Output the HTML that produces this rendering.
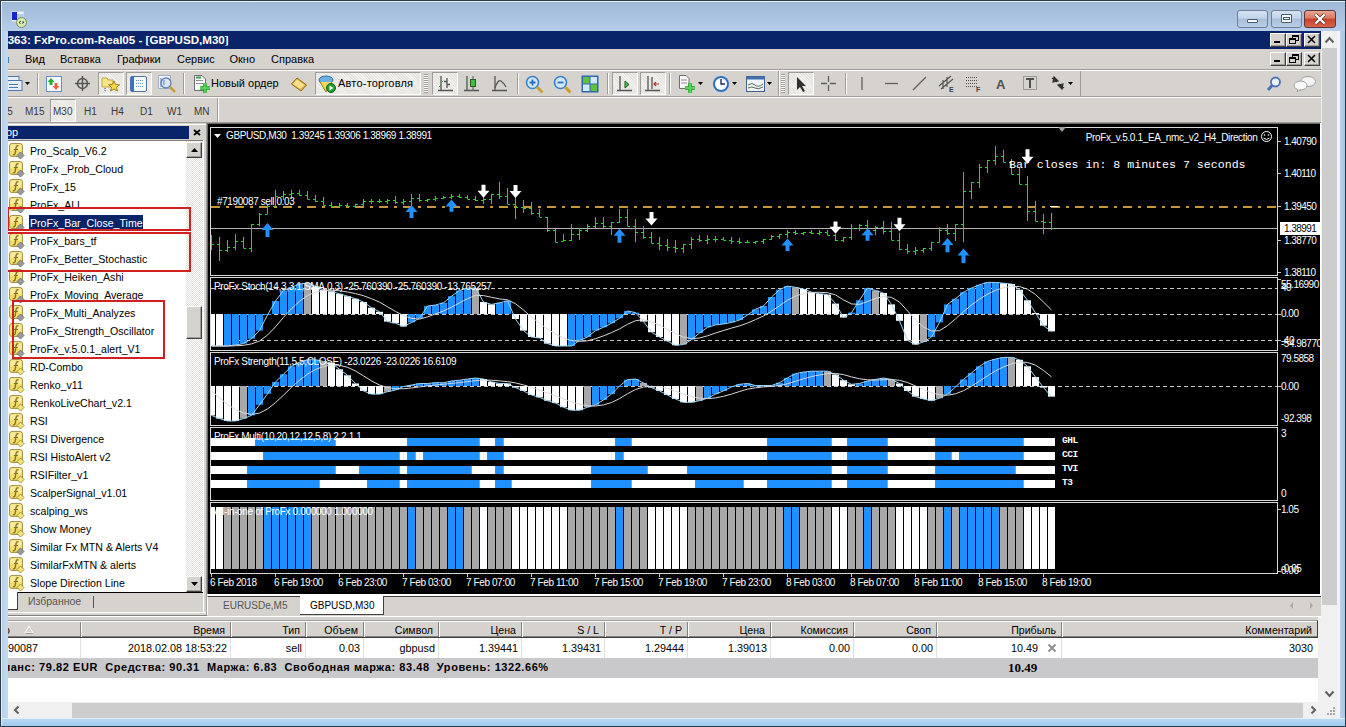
<!DOCTYPE html><html><head><meta charset="utf-8"><style>
*{margin:0;padding:0;box-sizing:border-box}
html,body{width:1346px;height:727px;overflow:hidden;background:#b9d1ea;font-family:"Liberation Sans",sans-serif;font-size:11px;color:#000}
.a{position:absolute}
.t{position:absolute;white-space:nowrap;line-height:1}
.gray{background:#d6d3ce}
.btnp{position:absolute;border:1px solid;border-color:#a09d98 #fff #fff #a09d98;background:repeating-linear-gradient(45deg,#e6e4e0 0 1px,#f2f1ee 1px 2px)}
.sep{position:absolute;width:2px;border-left:1px solid #a09d98;border-right:1px solid #fff}
</style></head><body>
<div class="a" style="left:0;top:0;width:1346px;height:727px;background:linear-gradient(#9db7d7 0,#a6c0dd 13px,#b5cde9 30px,#b9d1ea 60px)"></div>
<div class="a" style="left:0;top:0;width:1346px;height:1px;background:#2a3a48"></div>
<div class="a" style="left:1px;top:1px;width:1344px;height:1px;background:#e8f0f8"></div>
<div class="a" style="left:0;top:0;width:1px;height:727px;background:#2a3a48"></div>
<div class="a" style="left:1px;top:1px;width:1px;height:725px;background:#e0ecf8"></div>
<div class="a" style="left:1345px;top:0;width:1px;height:727px;background:#2a3a48"></div>
<div class="a" style="left:0;top:726px;width:1346px;height:1px;background:#2a3a48"></div>
<div class="a" style="left:0;top:718px;width:1346px;height:8px;background:linear-gradient(#e4f0fa 0,#e4f0fa 1px,#b8d8f2 1px,#9ecaee)"></div>
<svg class="a" style="left:10px;top:10px" width="18" height="18" viewBox="0 0 18 18">
<rect x="1.5" y="1.5" width="12" height="10" fill="#eef2fa" stroke="#c8d4e8"/>
<rect x="2" y="2" width="5" height="8" fill="#1428c8"/>
<rect x="7" y="4" width="6" height="6" fill="#b8c8f0"/>
<circle cx="11.5" cy="12.5" r="5" fill="#d8ecb0" stroke="#7a8a60"/>
<path d="M9,12.5 l2,-1.5 M10.5,13.5 l-1.5,-1 M14,12 l-2,1.5 M12.5,11.5 l1.5,1" stroke="#304020" stroke-width="1"/>
</svg>
<div class="a" style="left:1237px;top:10px;width:31px;height:18px;border:1px solid #6e7f94;border-radius:3px;background:linear-gradient(#d4e2f2 0,#c2d4ea 45%,#a9bfd9 50%,#b9cde6 100%)"></div>
<div class="a" style="left:1247px;top:19px;width:11px;height:4px;border:1px solid #4a5a70;background:#f4f8fc;border-radius:1px"></div>
<div class="a" style="left:1271px;top:10px;width:31px;height:18px;border:1px solid #6e7f94;border-radius:3px;background:linear-gradient(#d4e2f2 0,#c2d4ea 45%,#a9bfd9 50%,#b9cde6 100%)"></div>
<div class="a" style="left:1281px;top:14px;width:11px;height:9px;border:1px solid #4a5a70;background:#f4f8fc;border-radius:1px"></div>
<div class="a" style="left:1283px;top:17px;width:7px;height:3px;border:1px solid #4a5a70"></div>
<div class="a" style="left:1304px;top:10px;width:32px;height:18px;border:1px solid #5a3838;border-radius:3px;background:linear-gradient(#e8a494 0,#da7a66 45%,#c8402a 50%,#d8644c 100%)"></div>
<svg class="a" style="left:1312px;top:12px" width="16" height="14" viewBox="0 0 16 14"><path d="M3.5,2.5 L12.5,11.5 M12.5,2.5 L3.5,11.5" stroke="#4a2a2a" stroke-width="3.6"/><path d="M3.5,2.5 L12.5,11.5 M12.5,2.5 L3.5,11.5" stroke="#fff" stroke-width="2.4"/></svg>
<div class="a" style="left:8px;top:31px;width:1313px;height:18px;background:#0a246a"></div>
<div class="t" style="left:-2px;top:34px;color:#fff;font-weight:bold;font-size:11.6px;clip-path:inset(0 0 0 10px)">...363: FxPro.com-Real05 - [GBPUSD,M30]</div>
<div class="a" style="left:0;top:31px;width:8px;height:18px;background:#b5cde9"></div>
<div class="a" style="left:1270px;top:33px;width:16px;height:14px;background:#d6d3ce;border:1px solid;border-color:#fff #404040 #404040 #fff;box-shadow:inset -1px -1px 0 #a09d98"></div>
<div class="a" style="left:1286px;top:33px;width:16px;height:14px;background:#d6d3ce;border:1px solid;border-color:#fff #404040 #404040 #fff;box-shadow:inset -1px -1px 0 #a09d98"></div>
<div class="a" style="left:1304px;top:33px;width:16px;height:14px;background:#d6d3ce;border:1px solid;border-color:#fff #404040 #404040 #fff;box-shadow:inset -1px -1px 0 #a09d98"></div>
<div class="a" style="left:1274px;top:41px;width:6px;height:2px;background:#000"></div>
<svg class="a" style="left:1286px;top:33px" width="16" height="14" viewBox="0 0 16 14"><rect x="6.5" y="2.5" width="6" height="5" fill="none" stroke="#000"/><rect x="6" y="2" width="7" height="2" fill="#000"/><rect x="3.5" y="5.5" width="6" height="5" fill="#d6d3ce" stroke="#000"/><rect x="3" y="5" width="7" height="2" fill="#000"/></svg>
<svg class="a" style="left:1304px;top:33px" width="16" height="14" viewBox="0 0 16 14"><path d="M4,3 L11,10 M11,3 L4,10" stroke="#000" stroke-width="1.6"/></svg>
<div class="a gray" style="left:8px;top:49px;width:1313px;height:21px"></div>
<div class="a" style="left:8px;top:69px;width:1313px;height:1px;background:#a09d98"></div>
<div class="a" style="left:8px;top:70px;width:1313px;height:1px;background:#fff"></div>
<div class="t" style="left:-18px;top:54px;font-size:11px">Файл</div>
<div class="t" style="left:25px;top:54px;font-size:11px">Вид</div>
<div class="t" style="left:60px;top:54px;font-size:11px">Вставка</div>
<div class="t" style="left:117px;top:54px;font-size:11px">Графики</div>
<div class="t" style="left:177px;top:54px;font-size:11px">Сервис</div>
<div class="t" style="left:229.5px;top:54px;font-size:11px">Окно</div>
<div class="t" style="left:271px;top:54px;font-size:11px">Справка</div>
<div class="a" style="left:0;top:49px;width:8px;height:21px;background:#b9d1ea"></div>
<div class="a" style="left:1270px;top:52px;width:16px;height:14px;background:#d6d3ce;border:1px solid;border-color:#fff #404040 #404040 #fff;box-shadow:inset -1px -1px 0 #a09d98"></div>
<div class="a" style="left:1286px;top:52px;width:16px;height:14px;background:#d6d3ce;border:1px solid;border-color:#fff #404040 #404040 #fff;box-shadow:inset -1px -1px 0 #a09d98"></div>
<div class="a" style="left:1304px;top:52px;width:16px;height:14px;background:#d6d3ce;border:1px solid;border-color:#fff #404040 #404040 #fff;box-shadow:inset -1px -1px 0 #a09d98"></div>
<div class="a" style="left:1274px;top:60px;width:6px;height:2px;background:#000"></div>
<svg class="a" style="left:1286px;top:52px" width="16" height="14" viewBox="0 0 16 14"><rect x="6.5" y="2.5" width="6" height="5" fill="none" stroke="#000"/><rect x="6" y="2" width="7" height="2" fill="#000"/><rect x="3.5" y="5.5" width="6" height="5" fill="#d6d3ce" stroke="#000"/><rect x="3" y="5" width="7" height="2" fill="#000"/></svg>
<svg class="a" style="left:1304px;top:52px" width="16" height="14" viewBox="0 0 16 14"><path d="M4,3 L11,10 M11,3 L4,10" stroke="#000" stroke-width="1.6"/></svg>
<div class="a gray" style="left:8px;top:71px;width:1313px;height:26px"></div>
<div class="a" style="left:8px;top:96px;width:1313px;height:1px;background:#a09d98"></div>
<div class="a" style="left:8px;top:97px;width:1313px;height:1px;background:#fff"></div>
<div class="a" style="left:8px;top:71px;width:771px;height:25px;border-right:1px solid #a09d98"></div>
<div class="a" style="left:779px;top:71px;width:302px;height:25px;border-left:1px solid #fff;border-right:1px solid #a09d98"></div>
<svg class="a" style="left:8px;top:75px" width="16" height="17" viewBox="0 0 16 17"><rect x="-4" y="1.5" width="15" height="10" fill="#e6eef8" stroke="#5078b0"/><rect x="-1" y="5.5" width="15" height="10" fill="#e6eef8" stroke="#5078b0"/><path d="M1,9.5 H10 M1,12.5 H10" stroke="#5078b0"/></svg>
<svg class="a" style="left:25px;top:82px" width="6" height="4" viewBox="0 0 6 4"><path d="M0,0 H5 L2.5,3 Z" fill="#000"/></svg>
<div class="sep" style="left:37px;top:73px;height:21px"></div>
<svg class="a" style="left:46px;top:76px" width="16" height="16" viewBox="0 0 16 16"><rect x="0.5" y="0.5" width="15" height="15" fill="#f4f8fc" stroke="#6a90c0"/><path d="M5,2 L8.5,6 H6.5 V9 H3.5 V6 H1.5 Z" fill="#20b030"/><path d="M10,14 L13.5,10 H11.5 V7 H8.5 V10 H6.5 Z" fill="#f06040"/></svg>
<svg class="a" style="left:74px;top:75px" width="17" height="17" viewBox="0 0 17 17"><circle cx="8.5" cy="8.5" r="5" fill="none" stroke="#555" stroke-width="1.5"/><path d="M8.5,1 V16 M1,8.5 H16" stroke="#555" stroke-width="1.5"/></svg>
<div class="btnp" style="left:98px;top:72px;width:26px;height:23px"></div>
<svg class="a" style="left:101px;top:75px" width="20" height="18" viewBox="0 0 20 18"><path d="M1,3 H6 L7,5 H12 V12 H1 Z" fill="#f6e88a" stroke="#c0a840"/><path d="M13,6 L14.6,9.5 L18.5,9.8 L15.5,12.3 L16.5,16 L13,14 L9.5,16 L10.5,12.3 L7.5,9.8 L11.4,9.5 Z" fill="#f8d840" stroke="#a08020"/><path d="M4,13 V17" stroke="#333" stroke-dasharray="1,1"/></svg>
<div class="btnp" style="left:126px;top:72px;width:26px;height:23px"></div>
<svg class="a" style="left:130px;top:76px" width="17" height="16" viewBox="0 0 17 16"><rect x="0.5" y="0.5" width="16" height="15" rx="1.5" fill="#f4f8fc" stroke="#5070a0"/><rect x="1" y="1" width="3" height="14" fill="#3a70c8"/><path d="M6,4.5 H14 M6,7.5 H14 M6,10.5 H14" stroke="#7090c0" stroke-dasharray="1,1"/></svg>
<svg class="a" style="left:158px;top:75px" width="19" height="18" viewBox="0 0 19 18"><rect x="0.5" y="0.5" width="12" height="13" fill="#f0f4f8" stroke="#a0b0c8"/><circle cx="8" cy="8" r="5" fill="#d8e8f8" stroke="#6080b0" stroke-width="1.3"/><path d="M12,12 L17,17" stroke="#c8a030" stroke-width="2.5"/><path d="M3,3 V12 M6,5 V10" stroke="#6080b0"/></svg>
<div class="sep" style="left:183px;top:73px;height:21px"></div>
<svg class="a" style="left:193px;top:75px" width="18" height="19" viewBox="0 0 18 19"><path d="M1.5,0.5 H9 L12.5,4 V15.5 H1.5 Z" fill="#f8f8f8" stroke="#707070"/><path d="M3,5.5 H10 M3,8.5 H10" stroke="#909090"/><rect x="3" y="1.5" width="5" height="2" fill="#30a040"/><path d="M12,8 V18 M7,13 H17" stroke="#20a020" stroke-width="3.5"/><path d="M12,8 V18 M7,13 H17" stroke="#60e060" stroke-width="1.5"/></svg>
<div class="t" style="left:211px;top:78px;font-size:11px">Новый ордер</div>
<svg class="a" style="left:290px;top:75px" width="18" height="18" viewBox="0 0 18 18"><path d="M1.5,9 L7,3 L16.5,10 L11,16 Z" fill="#e0b040" stroke="#906818"/><path d="M3,9 L7,4.5 L14.5,10 L10.5,14 Z" fill="#f8e088"/></svg>
<div class="btnp" style="left:315px;top:72px;width:106px;height:23px"></div>
<svg class="a" style="left:318px;top:75px" width="18" height="19" viewBox="0 0 18 19"><ellipse cx="8" cy="5" rx="7" ry="4" fill="#70b0e0" stroke="#3070a0"/><path d="M2,7 L8,17 L14,7" fill="#f0d860" stroke="#a08020"/><circle cx="13" cy="13" r="4.5" fill="#20a030" stroke="#106018"/><path d="M11.5,10.5 L15.5,13 L11.5,15.5 Z" fill="#fff"/></svg>
<div class="t" style="left:338px;top:78px;font-size:11px;letter-spacing:0.2px">Авто-торговля</div>
<div class="a" style="left:424px;top:74px;width:4px;height:19px;background:repeating-linear-gradient(#a09d98 0 1px,#fff 1px 2px)"></div>
<div class="btnp" style="left:432px;top:72px;width:26px;height:23px"></div>
<svg class="a" style="left:437px;top:75px" width="17" height="18" viewBox="0 0 17 18"><path d="M4,1 V15 M1,15.5 H16 M10,3 V13 M7,6.5 H10 M10,9.5 H13" stroke="#555" stroke-width="1.3" fill="none"/><path d="M4,5 L6,7 M4,10 L2,12" stroke="#30a030"/></svg>
<svg class="a" style="left:463px;top:75px" width="17" height="18" viewBox="0 0 17 18"><path d="M4,1 V16 M1,15.5 H16" stroke="#555" stroke-width="1.3"/><path d="M10,1 V15" stroke="#555"/><rect x="7.5" y="4.5" width="5" height="7" fill="#40c040" stroke="#206020"/></svg>
<svg class="a" style="left:491px;top:75px" width="17" height="18" viewBox="0 0 17 18"><path d="M4,1 V16 M1,15.5 H16" stroke="#555" stroke-width="1.3"/><path d="M4,13 Q7,4 10,6 T15,12" stroke="#555" fill="none" stroke-width="1.2"/></svg>
<div class="sep" style="left:517px;top:73px;height:21px"></div>
<svg class="a" style="left:525px;top:75px" width="19" height="19" viewBox="0 0 19 19"><circle cx="7.5" cy="7.5" r="6" fill="#d0e8fa" stroke="#3a80c8" stroke-width="1.6"/><path d="M4.5,7.5 H10.5 M7.5,4.5 V10.5" stroke="#2a70c0" stroke-width="1.8"/><path d="M12,12 L17.5,17.5" stroke="#c8a030" stroke-width="3"/></svg>
<svg class="a" style="left:553px;top:75px" width="19" height="19" viewBox="0 0 19 19"><circle cx="7.5" cy="7.5" r="6" fill="#d0e8fa" stroke="#3a80c8" stroke-width="1.6"/><path d="M4.5,7.5 H10.5" stroke="#2a70c0" stroke-width="1.8"/><path d="M12,12 L17.5,17.5" stroke="#c8a030" stroke-width="3"/></svg>
<svg class="a" style="left:581px;top:75px" width="18" height="18" viewBox="0 0 18 18"><rect x="0.5" y="0.5" width="17" height="17" fill="#3068b0"/><rect x="2" y="2" width="6.5" height="6.5" fill="#60c040"/><rect x="9.5" y="2" width="6.5" height="6.5" fill="#d0e8f8"/><rect x="2" y="9.5" width="6.5" height="6.5" fill="#d0e8f8"/><rect x="9.5" y="9.5" width="6.5" height="6.5" fill="#60c040"/></svg>
<div class="sep" style="left:607px;top:73px;height:21px"></div>
<div class="btnp" style="left:612px;top:72px;width:26px;height:23px"></div>
<svg class="a" style="left:616px;top:75px" width="17" height="18" viewBox="0 0 17 18"><path d="M4,1 V16 M1,15.5 H16" stroke="#555" stroke-width="1.3"/><path d="M9,6 L13,9.5 L9,13 Z" fill="#40c040" stroke="#206020"/></svg>
<div class="btnp" style="left:640px;top:72px;width:26px;height:23px"></div>
<svg class="a" style="left:644px;top:75px" width="17" height="18" viewBox="0 0 17 18"><path d="M4,1 V16 M1,15.5 H16 M8,2 V14" stroke="#555" stroke-width="1.3"/><path d="M10,9 H15 M12,7 L10,9 L12,11" stroke="#c03020" stroke-width="1.2" fill="none"/></svg>
<div class="sep" style="left:669px;top:73px;height:21px"></div>
<svg class="a" style="left:677px;top:74px" width="20" height="20" viewBox="0 0 20 20"><path d="M2.5,1.5 H9 L12,4.5 V14.5 H2.5 Z" fill="#f8f8f8" stroke="#707070"/><path d="M4,6 H10 M4,9 H10" stroke="#909090"/><path d="M13,9 V19 M8,14 H18" stroke="#20a020" stroke-width="3.5"/><path d="M13,9 V19 M8,14 H18" stroke="#60e060" stroke-width="1.5"/></svg>
<svg class="a" style="left:698px;top:82px" width="6" height="4" viewBox="0 0 6 4"><path d="M0,0 H5 L2.5,3 Z" fill="#000"/></svg>
<svg class="a" style="left:712px;top:75px" width="18" height="18" viewBox="0 0 18 18"><circle cx="9" cy="9" r="8" fill="#2a70c8"/><circle cx="9" cy="9" r="6" fill="#fff"/><path d="M9,4 V9 H13" stroke="#203050" stroke-width="1.4" fill="none"/></svg>
<svg class="a" style="left:732px;top:82px" width="6" height="4" viewBox="0 0 6 4"><path d="M0,0 H5 L2.5,3 Z" fill="#000"/></svg>
<svg class="a" style="left:746px;top:76px" width="19" height="16" viewBox="0 0 19 16"><rect x="0.5" y="0.5" width="18" height="15" fill="#f0f4f8" stroke="#406090"/><rect x="0.5" y="0.5" width="18" height="3" fill="#4070b0"/><path d="M2,9 Q6,6 9,9 T17,8 M2,12 Q6,10 9,12 T17,11" stroke="#507050" fill="none"/></svg>
<svg class="a" style="left:767px;top:82px" width="6" height="4" viewBox="0 0 6 4"><path d="M0,0 H5 L2.5,3 Z" fill="#000"/></svg>
<div class="a" style="left:781px;top:74px;width:4px;height:19px;background:repeating-linear-gradient(#a09d98 0 1px,#fff 1px 2px)"></div>
<div class="btnp" style="left:788px;top:72px;width:26px;height:23px"></div>
<svg class="a" style="left:794px;top:75px" width="14" height="18" viewBox="0 0 14 18"><path d="M3,2 L3,15 L6,12 L9,17 L11,16 L8,11 L12,11 Z" fill="#303030"/></svg>
<svg class="a" style="left:820px;top:75px" width="17" height="17" viewBox="0 0 17 17"><path d="M8.5,1 V7 M8.5,10 V16 M1,8.5 H7 M10,8.5 H16" stroke="#606060" stroke-width="1.3"/></svg>
<div class="sep" style="left:845px;top:73px;height:21px"></div>
<svg class="a" style="left:855px;top:75px" width="14" height="17" viewBox="0 0 14 17"><path d="M7,2 V15" stroke="#606060" stroke-width="1.3"/></svg>
<svg class="a" style="left:883px;top:75px" width="17" height="17" viewBox="0 0 17 17"><path d="M2,8.5 H15" stroke="#606060" stroke-width="1.3"/></svg>
<svg class="a" style="left:911px;top:75px" width="17" height="17" viewBox="0 0 17 17"><path d="M2,15 L15,2" stroke="#606060" stroke-width="1.3"/></svg>
<svg class="a" style="left:938px;top:74px" width="19" height="19" viewBox="0 0 19 19"><path d="M1,12 L13,2 M3,15 L15,5 M5,6 V15 M9,3 V13" stroke="#505050" stroke-width="1.1" fill="none"/><text x="11" y="18" font-size="7" font-weight="bold" fill="#404040" font-family="Liberation Sans">E</text></svg>
<svg class="a" style="left:965px;top:74px" width="19" height="19" viewBox="0 0 19 19"><path d="M1,3.5 H13 M1,6.5 H13 M1,9.5 H13 M1,12.5 H13" stroke="#505050" stroke-dasharray="1,1"/><text x="11" y="18" font-size="7" font-weight="bold" fill="#404040" font-family="Liberation Sans">F</text></svg>
<div class="t" style="left:996px;top:78px;font-size:13px;font-weight:bold;color:#505050">A</div>
<svg class="a" style="left:1022px;top:74px" width="17" height="18" viewBox="0 0 17 18"><rect x="1.5" y="2.5" width="13" height="13" fill="none" stroke="#606060" stroke-dasharray="1,1"/><path d="M4,5 H12 M8,5 V14" stroke="#505050" stroke-width="2"/></svg>
<svg class="a" style="left:1050px;top:75px" width="16" height="17" viewBox="0 0 16 17"><path d="M2,3 L7,7 M4,2 L8,6 L3,7 Z M14,13 L9,9 M12,14 L8,10 L13,9 Z" fill="#303030" stroke="#303030" stroke-width="1.2"/></svg>
<svg class="a" style="left:1068px;top:82px" width="6" height="4" viewBox="0 0 6 4"><path d="M0,0 H5 L2.5,3 Z" fill="#000"/></svg>
<svg class="a" style="left:1266px;top:76px" width="16" height="16" viewBox="0 0 16 16"><circle cx="9.5" cy="6" r="4.5" fill="#eef4fc" stroke="#4a70c0" stroke-width="1.8"/><path d="M6.5,9 L2,14" stroke="#4a70c0" stroke-width="3"/></svg>
<svg class="a" style="left:1293px;top:75px" width="24" height="18" viewBox="0 0 24 18"><ellipse cx="15" cy="6.5" rx="7.5" ry="5" fill="#f4f4f4" stroke="#a0a0a0"/><ellipse cx="7.5" cy="10.5" rx="6.5" ry="4.5" fill="#f8f8f8" stroke="#a0a0a0"/><path d="M5,14 L4,17 L8,14.5" fill="#f8f8f8" stroke="#a0a0a0"/></svg>
<div class="a gray" style="left:8px;top:98px;width:1313px;height:25px"></div>
<div class="a" style="left:8px;top:122px;width:1313px;height:1px;background:#a09d98"></div>
<div class="btnp" style="left:50px;top:99px;width:26px;height:23px"></div>
<div class="t" style="left:-1px;top:107px;font-size:10px;color:#3a3a3a">M5</div>
<div class="t" style="left:25px;top:107px;font-size:10px;color:#3a3a3a">M15</div>
<div class="t" style="left:53px;top:107px;font-size:10px;color:#3a3a3a">M30</div>
<div class="t" style="left:84px;top:107px;font-size:10px;color:#3a3a3a">H1</div>
<div class="t" style="left:111px;top:107px;font-size:10px;color:#3a3a3a">H4</div>
<div class="t" style="left:140px;top:107px;font-size:10px;color:#3a3a3a">D1</div>
<div class="t" style="left:167px;top:107px;font-size:10px;color:#3a3a3a">W1</div>
<div class="t" style="left:194px;top:107px;font-size:10px;color:#3a3a3a">MN</div>
<div class="a" style="left:0;top:98px;width:8px;height:25px;background:#b9d1ea"></div>
<div class="sep" style="left:217px;top:98px;height:24px"></div>
<div class="a gray" style="left:8px;top:123px;width:199px;height:492px"></div>
<div class="a" style="left:8px;top:124px;width:198px;height:1px;background:#fff"></div>
<div class="a" style="left:8px;top:126px;width:181px;height:13px;background:#0a246a"></div>
<div class="t" style="left:1px;top:127px;color:#fff;font-size:11px;clip-path:inset(0 0 0 7px)">тор</div>
<div class="a" style="left:0px;top:123px;width:8px;height:20px;background:#b9d1ea"></div>
<svg class="a" style="left:193px;top:129px" width="8" height="7" viewBox="0 0 8 7"><path d="M1,1 L7,6 M7,1 L1,6" stroke="#000" stroke-width="1.8"/></svg>
<div class="a" style="left:8px;top:140px;width:195px;height:452px;background:#fff;border-top:1px solid #808080"></div>
<svg class="a" style="left:9px;top:143px" width="16" height="16" viewBox="0 0 16 16"><rect x="0.5" y="0.5" width="13" height="13" rx="2.5" fill="#f2dc6a" stroke="#a89448"/><rect x="1.5" y="1.5" width="11" height="6" rx="1.5" fill="#f8ec9c"/><path d="M9.5,2.8 Q7.3,2.3 7,5 L6.2,10.3 Q5.8,12.3 3.8,11.8" stroke="#8a7420" stroke-width="1.4" fill="none"/><path d="M4.8,6.5 H9" stroke="#8a7420" stroke-width="1.2"/><path d="M11.5,9 L15,12.5 L11.5,16 L8,12.5 Z" fill="#9a9a9a" stroke="#707070" stroke-width="0.9"/></svg>
<div class="t" style="left:30px;top:146px;font-size:10.6px">Pro_Scalp_V6.2</div>
<svg class="a" style="left:9px;top:161px" width="16" height="16" viewBox="0 0 16 16"><rect x="0.5" y="0.5" width="13" height="13" rx="2.5" fill="#f2dc6a" stroke="#a89448"/><rect x="1.5" y="1.5" width="11" height="6" rx="1.5" fill="#f8ec9c"/><path d="M9.5,2.8 Q7.3,2.3 7,5 L6.2,10.3 Q5.8,12.3 3.8,11.8" stroke="#8a7420" stroke-width="1.4" fill="none"/><path d="M4.8,6.5 H9" stroke="#8a7420" stroke-width="1.2"/><path d="M11.5,9 L15,12.5 L11.5,16 L8,12.5 Z" fill="#9a9a9a" stroke="#707070" stroke-width="0.9"/></svg>
<div class="t" style="left:30px;top:164px;font-size:10.6px">ProFx _Prob_Cloud</div>
<svg class="a" style="left:9px;top:179px" width="16" height="16" viewBox="0 0 16 16"><rect x="0.5" y="0.5" width="13" height="13" rx="2.5" fill="#f2dc6a" stroke="#a89448"/><rect x="1.5" y="1.5" width="11" height="6" rx="1.5" fill="#f8ec9c"/><path d="M9.5,2.8 Q7.3,2.3 7,5 L6.2,10.3 Q5.8,12.3 3.8,11.8" stroke="#8a7420" stroke-width="1.4" fill="none"/><path d="M4.8,6.5 H9" stroke="#8a7420" stroke-width="1.2"/><path d="M11.5,9 L15,12.5 L11.5,16 L8,12.5 Z" fill="#9a9a9a" stroke="#707070" stroke-width="0.9"/></svg>
<div class="t" style="left:30px;top:182px;font-size:10.6px">ProFx_15</div>
<svg class="a" style="left:9px;top:197px" width="16" height="16" viewBox="0 0 16 16"><rect x="0.5" y="0.5" width="13" height="13" rx="2.5" fill="#f2dc6a" stroke="#a89448"/><rect x="1.5" y="1.5" width="11" height="6" rx="1.5" fill="#f8ec9c"/><path d="M9.5,2.8 Q7.3,2.3 7,5 L6.2,10.3 Q5.8,12.3 3.8,11.8" stroke="#8a7420" stroke-width="1.4" fill="none"/><path d="M4.8,6.5 H9" stroke="#8a7420" stroke-width="1.2"/><path d="M11.5,9 L15,12.5 L11.5,16 L8,12.5 Z" fill="#9a9a9a" stroke="#707070" stroke-width="0.9"/></svg>
<div class="t" style="left:30px;top:200px;font-size:10.6px">ProFx_ALL</div>
<svg class="a" style="left:9px;top:215px" width="16" height="16" viewBox="0 0 16 16"><rect x="0.5" y="0.5" width="13" height="13" rx="2.5" fill="#f2dc6a" stroke="#a89448"/><rect x="1.5" y="1.5" width="11" height="6" rx="1.5" fill="#f8ec9c"/><path d="M9.5,2.8 Q7.3,2.3 7,5 L6.2,10.3 Q5.8,12.3 3.8,11.8" stroke="#8a7420" stroke-width="1.4" fill="none"/><path d="M4.8,6.5 H9" stroke="#8a7420" stroke-width="1.2"/><path d="M11.5,9 L15,12.5 L11.5,16 L8,12.5 Z" fill="#9a9a9a" stroke="#707070" stroke-width="0.9"/></svg>
<div class="a" style="left:29px;top:215px;width:114px;height:15px;background:#0a246a"></div>
<div class="t" style="left:30px;top:218px;color:#fff;font-size:10.6px">ProFx_Bar_Close_Time</div>
<svg class="a" style="left:9px;top:233px" width="16" height="16" viewBox="0 0 16 16"><rect x="0.5" y="0.5" width="13" height="13" rx="2.5" fill="#f2dc6a" stroke="#a89448"/><rect x="1.5" y="1.5" width="11" height="6" rx="1.5" fill="#f8ec9c"/><path d="M9.5,2.8 Q7.3,2.3 7,5 L6.2,10.3 Q5.8,12.3 3.8,11.8" stroke="#8a7420" stroke-width="1.4" fill="none"/><path d="M4.8,6.5 H9" stroke="#8a7420" stroke-width="1.2"/><path d="M11.5,9 L15,12.5 L11.5,16 L8,12.5 Z" fill="#9a9a9a" stroke="#707070" stroke-width="0.9"/></svg>
<div class="t" style="left:30px;top:236px;font-size:10.6px">ProFx_bars_tf</div>
<svg class="a" style="left:9px;top:251px" width="16" height="16" viewBox="0 0 16 16"><rect x="0.5" y="0.5" width="13" height="13" rx="2.5" fill="#f2dc6a" stroke="#a89448"/><rect x="1.5" y="1.5" width="11" height="6" rx="1.5" fill="#f8ec9c"/><path d="M9.5,2.8 Q7.3,2.3 7,5 L6.2,10.3 Q5.8,12.3 3.8,11.8" stroke="#8a7420" stroke-width="1.4" fill="none"/><path d="M4.8,6.5 H9" stroke="#8a7420" stroke-width="1.2"/><path d="M11.5,9 L15,12.5 L11.5,16 L8,12.5 Z" fill="#9a9a9a" stroke="#707070" stroke-width="0.9"/></svg>
<div class="t" style="left:30px;top:254px;font-size:10.6px">ProFx_Better_Stochastic</div>
<svg class="a" style="left:9px;top:269px" width="16" height="16" viewBox="0 0 16 16"><rect x="0.5" y="0.5" width="13" height="13" rx="2.5" fill="#f2dc6a" stroke="#a89448"/><rect x="1.5" y="1.5" width="11" height="6" rx="1.5" fill="#f8ec9c"/><path d="M9.5,2.8 Q7.3,2.3 7,5 L6.2,10.3 Q5.8,12.3 3.8,11.8" stroke="#8a7420" stroke-width="1.4" fill="none"/><path d="M4.8,6.5 H9" stroke="#8a7420" stroke-width="1.2"/><path d="M11.5,9 L15,12.5 L11.5,16 L8,12.5 Z" fill="#9a9a9a" stroke="#707070" stroke-width="0.9"/></svg>
<div class="t" style="left:30px;top:272px;font-size:10.6px">ProFx_Heiken_Ashi</div>
<svg class="a" style="left:9px;top:287px" width="16" height="16" viewBox="0 0 16 16"><rect x="0.5" y="0.5" width="13" height="13" rx="2.5" fill="#f2dc6a" stroke="#a89448"/><rect x="1.5" y="1.5" width="11" height="6" rx="1.5" fill="#f8ec9c"/><path d="M9.5,2.8 Q7.3,2.3 7,5 L6.2,10.3 Q5.8,12.3 3.8,11.8" stroke="#8a7420" stroke-width="1.4" fill="none"/><path d="M4.8,6.5 H9" stroke="#8a7420" stroke-width="1.2"/><path d="M11.5,9 L15,12.5 L11.5,16 L8,12.5 Z" fill="#9a9a9a" stroke="#707070" stroke-width="0.9"/></svg>
<div class="t" style="left:30px;top:290px;font-size:10.6px">ProFx_Moving_Average</div>
<svg class="a" style="left:9px;top:305px" width="16" height="16" viewBox="0 0 16 16"><rect x="0.5" y="0.5" width="13" height="13" rx="2.5" fill="#f2dc6a" stroke="#a89448"/><rect x="1.5" y="1.5" width="11" height="6" rx="1.5" fill="#f8ec9c"/><path d="M9.5,2.8 Q7.3,2.3 7,5 L6.2,10.3 Q5.8,12.3 3.8,11.8" stroke="#8a7420" stroke-width="1.4" fill="none"/><path d="M4.8,6.5 H9" stroke="#8a7420" stroke-width="1.2"/><path d="M11.5,9 L15,12.5 L11.5,16 L8,12.5 Z" fill="#9a9a9a" stroke="#707070" stroke-width="0.9"/></svg>
<div class="t" style="left:30px;top:308px;font-size:10.6px">ProFx_Multi_Analyzes</div>
<svg class="a" style="left:9px;top:323px" width="16" height="16" viewBox="0 0 16 16"><rect x="0.5" y="0.5" width="13" height="13" rx="2.5" fill="#f2dc6a" stroke="#a89448"/><rect x="1.5" y="1.5" width="11" height="6" rx="1.5" fill="#f8ec9c"/><path d="M9.5,2.8 Q7.3,2.3 7,5 L6.2,10.3 Q5.8,12.3 3.8,11.8" stroke="#8a7420" stroke-width="1.4" fill="none"/><path d="M4.8,6.5 H9" stroke="#8a7420" stroke-width="1.2"/><path d="M11.5,9 L15,12.5 L11.5,16 L8,12.5 Z" fill="#9a9a9a" stroke="#707070" stroke-width="0.9"/></svg>
<div class="t" style="left:30px;top:326px;font-size:10.6px">ProFx_Strength_Oscillator</div>
<svg class="a" style="left:9px;top:341px" width="16" height="16" viewBox="0 0 16 16"><rect x="0.5" y="0.5" width="13" height="13" rx="2.5" fill="#f2dc6a" stroke="#a89448"/><rect x="1.5" y="1.5" width="11" height="6" rx="1.5" fill="#f8ec9c"/><path d="M9.5,2.8 Q7.3,2.3 7,5 L6.2,10.3 Q5.8,12.3 3.8,11.8" stroke="#8a7420" stroke-width="1.4" fill="none"/><path d="M4.8,6.5 H9" stroke="#8a7420" stroke-width="1.2"/><path d="M11.5,9 L15,12.5 L11.5,16 L8,12.5 Z" fill="#9a9a9a" stroke="#707070" stroke-width="0.9"/></svg>
<div class="t" style="left:30px;top:344px;font-size:10.6px">ProFx_v.5.0.1_alert_V1</div>
<svg class="a" style="left:9px;top:359px" width="16" height="16" viewBox="0 0 16 16"><rect x="0.5" y="0.5" width="13" height="13" rx="2.5" fill="#f2dc6a" stroke="#a89448"/><rect x="1.5" y="1.5" width="11" height="6" rx="1.5" fill="#f8ec9c"/><path d="M9.5,2.8 Q7.3,2.3 7,5 L6.2,10.3 Q5.8,12.3 3.8,11.8" stroke="#8a7420" stroke-width="1.4" fill="none"/><path d="M4.8,6.5 H9" stroke="#8a7420" stroke-width="1.2"/><path d="M11.5,9 L15,12.5 L11.5,16 L8,12.5 Z" fill="#f4e47a" stroke="#9a8a30" stroke-width="0.9"/></svg>
<div class="t" style="left:30px;top:362px;font-size:10.6px">RD-Combo</div>
<svg class="a" style="left:9px;top:377px" width="16" height="16" viewBox="0 0 16 16"><rect x="0.5" y="0.5" width="13" height="13" rx="2.5" fill="#f2dc6a" stroke="#a89448"/><rect x="1.5" y="1.5" width="11" height="6" rx="1.5" fill="#f8ec9c"/><path d="M9.5,2.8 Q7.3,2.3 7,5 L6.2,10.3 Q5.8,12.3 3.8,11.8" stroke="#8a7420" stroke-width="1.4" fill="none"/><path d="M4.8,6.5 H9" stroke="#8a7420" stroke-width="1.2"/><path d="M11.5,9 L15,12.5 L11.5,16 L8,12.5 Z" fill="#f4e47a" stroke="#9a8a30" stroke-width="0.9"/></svg>
<div class="t" style="left:30px;top:380px;font-size:10.6px">Renko_v11</div>
<svg class="a" style="left:9px;top:395px" width="16" height="16" viewBox="0 0 16 16"><rect x="0.5" y="0.5" width="13" height="13" rx="2.5" fill="#f2dc6a" stroke="#a89448"/><rect x="1.5" y="1.5" width="11" height="6" rx="1.5" fill="#f8ec9c"/><path d="M9.5,2.8 Q7.3,2.3 7,5 L6.2,10.3 Q5.8,12.3 3.8,11.8" stroke="#8a7420" stroke-width="1.4" fill="none"/><path d="M4.8,6.5 H9" stroke="#8a7420" stroke-width="1.2"/><path d="M11.5,9 L15,12.5 L11.5,16 L8,12.5 Z" fill="#f4e47a" stroke="#9a8a30" stroke-width="0.9"/></svg>
<div class="t" style="left:30px;top:398px;font-size:10.6px">RenkoLiveChart_v2.1</div>
<svg class="a" style="left:9px;top:413px" width="16" height="16" viewBox="0 0 16 16"><rect x="0.5" y="0.5" width="13" height="13" rx="2.5" fill="#f2dc6a" stroke="#a89448"/><rect x="1.5" y="1.5" width="11" height="6" rx="1.5" fill="#f8ec9c"/><path d="M9.5,2.8 Q7.3,2.3 7,5 L6.2,10.3 Q5.8,12.3 3.8,11.8" stroke="#8a7420" stroke-width="1.4" fill="none"/><path d="M4.8,6.5 H9" stroke="#8a7420" stroke-width="1.2"/><path d="M11.5,9 L15,12.5 L11.5,16 L8,12.5 Z" fill="#f4e47a" stroke="#9a8a30" stroke-width="0.9"/></svg>
<div class="t" style="left:30px;top:416px;font-size:10.6px">RSI</div>
<svg class="a" style="left:9px;top:431px" width="16" height="16" viewBox="0 0 16 16"><rect x="0.5" y="0.5" width="13" height="13" rx="2.5" fill="#f2dc6a" stroke="#a89448"/><rect x="1.5" y="1.5" width="11" height="6" rx="1.5" fill="#f8ec9c"/><path d="M9.5,2.8 Q7.3,2.3 7,5 L6.2,10.3 Q5.8,12.3 3.8,11.8" stroke="#8a7420" stroke-width="1.4" fill="none"/><path d="M4.8,6.5 H9" stroke="#8a7420" stroke-width="1.2"/><path d="M11.5,9 L15,12.5 L11.5,16 L8,12.5 Z" fill="#f4e47a" stroke="#9a8a30" stroke-width="0.9"/></svg>
<div class="t" style="left:30px;top:434px;font-size:10.6px">RSI Divergence</div>
<svg class="a" style="left:9px;top:449px" width="16" height="16" viewBox="0 0 16 16"><rect x="0.5" y="0.5" width="13" height="13" rx="2.5" fill="#f2dc6a" stroke="#a89448"/><rect x="1.5" y="1.5" width="11" height="6" rx="1.5" fill="#f8ec9c"/><path d="M9.5,2.8 Q7.3,2.3 7,5 L6.2,10.3 Q5.8,12.3 3.8,11.8" stroke="#8a7420" stroke-width="1.4" fill="none"/><path d="M4.8,6.5 H9" stroke="#8a7420" stroke-width="1.2"/><path d="M11.5,9 L15,12.5 L11.5,16 L8,12.5 Z" fill="#f4e47a" stroke="#9a8a30" stroke-width="0.9"/></svg>
<div class="t" style="left:30px;top:452px;font-size:10.6px">RSI HistoAlert v2</div>
<svg class="a" style="left:9px;top:467px" width="16" height="16" viewBox="0 0 16 16"><rect x="0.5" y="0.5" width="13" height="13" rx="2.5" fill="#f2dc6a" stroke="#a89448"/><rect x="1.5" y="1.5" width="11" height="6" rx="1.5" fill="#f8ec9c"/><path d="M9.5,2.8 Q7.3,2.3 7,5 L6.2,10.3 Q5.8,12.3 3.8,11.8" stroke="#8a7420" stroke-width="1.4" fill="none"/><path d="M4.8,6.5 H9" stroke="#8a7420" stroke-width="1.2"/><path d="M11.5,9 L15,12.5 L11.5,16 L8,12.5 Z" fill="#f4e47a" stroke="#9a8a30" stroke-width="0.9"/></svg>
<div class="t" style="left:30px;top:470px;font-size:10.6px">RSIFilter_v1</div>
<svg class="a" style="left:9px;top:485px" width="16" height="16" viewBox="0 0 16 16"><rect x="0.5" y="0.5" width="13" height="13" rx="2.5" fill="#f2dc6a" stroke="#a89448"/><rect x="1.5" y="1.5" width="11" height="6" rx="1.5" fill="#f8ec9c"/><path d="M9.5,2.8 Q7.3,2.3 7,5 L6.2,10.3 Q5.8,12.3 3.8,11.8" stroke="#8a7420" stroke-width="1.4" fill="none"/><path d="M4.8,6.5 H9" stroke="#8a7420" stroke-width="1.2"/><path d="M11.5,9 L15,12.5 L11.5,16 L8,12.5 Z" fill="#f4e47a" stroke="#9a8a30" stroke-width="0.9"/></svg>
<div class="t" style="left:30px;top:488px;font-size:10.6px">ScalperSignal_v1.01</div>
<svg class="a" style="left:9px;top:503px" width="16" height="16" viewBox="0 0 16 16"><rect x="0.5" y="0.5" width="13" height="13" rx="2.5" fill="#f2dc6a" stroke="#a89448"/><rect x="1.5" y="1.5" width="11" height="6" rx="1.5" fill="#f8ec9c"/><path d="M9.5,2.8 Q7.3,2.3 7,5 L6.2,10.3 Q5.8,12.3 3.8,11.8" stroke="#8a7420" stroke-width="1.4" fill="none"/><path d="M4.8,6.5 H9" stroke="#8a7420" stroke-width="1.2"/><path d="M11.5,9 L15,12.5 L11.5,16 L8,12.5 Z" fill="#f4e47a" stroke="#9a8a30" stroke-width="0.9"/></svg>
<div class="t" style="left:30px;top:506px;font-size:10.6px">scalping_ws</div>
<svg class="a" style="left:9px;top:521px" width="16" height="16" viewBox="0 0 16 16"><rect x="0.5" y="0.5" width="13" height="13" rx="2.5" fill="#f2dc6a" stroke="#a89448"/><rect x="1.5" y="1.5" width="11" height="6" rx="1.5" fill="#f8ec9c"/><path d="M9.5,2.8 Q7.3,2.3 7,5 L6.2,10.3 Q5.8,12.3 3.8,11.8" stroke="#8a7420" stroke-width="1.4" fill="none"/><path d="M4.8,6.5 H9" stroke="#8a7420" stroke-width="1.2"/><path d="M11.5,9 L15,12.5 L11.5,16 L8,12.5 Z" fill="#f4e47a" stroke="#9a8a30" stroke-width="0.9"/></svg>
<div class="t" style="left:30px;top:524px;font-size:10.6px">Show Money</div>
<svg class="a" style="left:9px;top:539px" width="16" height="16" viewBox="0 0 16 16"><rect x="0.5" y="0.5" width="13" height="13" rx="2.5" fill="#f2dc6a" stroke="#a89448"/><rect x="1.5" y="1.5" width="11" height="6" rx="1.5" fill="#f8ec9c"/><path d="M9.5,2.8 Q7.3,2.3 7,5 L6.2,10.3 Q5.8,12.3 3.8,11.8" stroke="#8a7420" stroke-width="1.4" fill="none"/><path d="M4.8,6.5 H9" stroke="#8a7420" stroke-width="1.2"/><path d="M11.5,9 L15,12.5 L11.5,16 L8,12.5 Z" fill="#9a9a9a" stroke="#707070" stroke-width="0.9"/></svg>
<div class="t" style="left:30px;top:542px;font-size:10.6px">Similar Fx MTN &amp; Alerts V4</div>
<svg class="a" style="left:9px;top:557px" width="16" height="16" viewBox="0 0 16 16"><rect x="0.5" y="0.5" width="13" height="13" rx="2.5" fill="#f2dc6a" stroke="#a89448"/><rect x="1.5" y="1.5" width="11" height="6" rx="1.5" fill="#f8ec9c"/><path d="M9.5,2.8 Q7.3,2.3 7,5 L6.2,10.3 Q5.8,12.3 3.8,11.8" stroke="#8a7420" stroke-width="1.4" fill="none"/><path d="M4.8,6.5 H9" stroke="#8a7420" stroke-width="1.2"/><path d="M11.5,9 L15,12.5 L11.5,16 L8,12.5 Z" fill="#f4e47a" stroke="#9a8a30" stroke-width="0.9"/></svg>
<div class="t" style="left:30px;top:560px;font-size:10.6px">SimilarFxMTN &amp; alerts</div>
<svg class="a" style="left:9px;top:575px" width="16" height="16" viewBox="0 0 16 16"><rect x="0.5" y="0.5" width="13" height="13" rx="2.5" fill="#f2dc6a" stroke="#a89448"/><rect x="1.5" y="1.5" width="11" height="6" rx="1.5" fill="#f8ec9c"/><path d="M9.5,2.8 Q7.3,2.3 7,5 L6.2,10.3 Q5.8,12.3 3.8,11.8" stroke="#8a7420" stroke-width="1.4" fill="none"/><path d="M4.8,6.5 H9" stroke="#8a7420" stroke-width="1.2"/><path d="M11.5,9 L15,12.5 L11.5,16 L8,12.5 Z" fill="#f4e47a" stroke="#9a8a30" stroke-width="0.9"/></svg>
<div class="t" style="left:30px;top:578px;font-size:10.6px">Slope Direction Line</div>
<div class="a" style="left:186px;top:141px;width:17px;height:451px;background:repeating-conic-gradient(#fcfcfb 0 25%,#e2e0dc 0 50%) 0 0/2px 2px"></div>
<div class="a" style="left:186px;top:142px;width:16px;height:16px;background:#d6d3ce;border:1px solid;border-color:#fff #404040 #404040 #fff;box-shadow:inset -1px -1px 0 #a09d98"></div>
<svg class="a" style="left:189px;top:147px" width="11" height="6" viewBox="0 0 11 6"><path d="M2,5 L5.5,1 L9,5 Z" fill="#000"/></svg>
<div class="a" style="left:186px;top:576px;width:16px;height:16px;background:#d6d3ce;border:1px solid;border-color:#fff #404040 #404040 #fff;box-shadow:inset -1px -1px 0 #a09d98"></div>
<svg class="a" style="left:189px;top:581px" width="11" height="6" viewBox="0 0 11 6"><path d="M2,1 L5.5,5 L9,1 Z" fill="#000"/></svg>
<div class="a" style="left:186px;top:306px;width:16px;height:33px;background:#d6d3ce;border:1px solid;border-color:#fff #404040 #404040 #fff;box-shadow:inset -1px -1px 0 #a09d98"></div>
<div class="a" style="left:7px;top:207px;width:184px;height:24px;border:2px solid #d02020"></div>
<div class="a" style="left:6px;top:232px;width:185px;height:40px;border:2px solid #d02020"></div>
<div class="a" style="left:12px;top:300px;width:153px;height:59px;border:2px solid #d02020"></div>
<div class="a" style="left:8px;top:592px;width:195px;height:1px;background:#000"></div>
<div class="a" style="left:8px;top:592px;width:10px;height:18px;background:#fff;border-right:1px solid #404040;border-bottom:1px solid #404040"></div>
<div class="t" style="left:28px;top:596px;font-size:10.5px;color:#555">Избранное</div>
<div class="a" style="left:93px;top:596px;width:1px;height:12px;background:#555"></div>
<div class="a" style="left:206px;top:123px;width:1px;height:493px;background:#a0a0a0"></div>
<div class="a" style="left:203px;top:140px;width:1px;height:473px;background:#fff"></div>
<div class="a" style="left:8px;top:612px;width:198px;height:1px;background:#fff"></div>
<div class="a" style="left:8px;top:615px;width:199px;height:1px;background:#808080"></div>
<div class="a" style="left:0;top:123px;width:8px;height:500px;background:#b9d1ea"></div>
<div class="a" style="left:207px;top:123px;width:1114px;height:471px;background:#000;border-left:1px solid #6a6a6a;border-top:1px solid #6a6a6a"></div>
<svg style="position:absolute;left:0;top:0" width="1346" height="727" viewBox="0 0 1346 727" font-family="Liberation Sans, sans-serif">
<defs><clipPath id="cm"><rect x="211" y="128" width="1066" height="147"/></clipPath><clipPath id="cs"><rect x="211" y="278" width="1066" height="72"/></clipPath><clipPath id="ct"><rect x="211" y="353" width="1066" height="72"/></clipPath></defs>
<rect x="210.5" y="127.5" width="1067" height="148" fill="none" stroke="#d8d8d8" stroke-width="1"/>
<rect x="210.5" y="277.5" width="1067" height="73" fill="none" stroke="#d8d8d8" stroke-width="1"/>
<rect x="210.5" y="352.5" width="1067" height="73" fill="none" stroke="#d8d8d8" stroke-width="1"/>
<rect x="210.5" y="427.5" width="1067" height="73" fill="none" stroke="#d8d8d8" stroke-width="1"/>
<rect x="210.5" y="502.5" width="1067" height="71" fill="none" stroke="#d8d8d8" stroke-width="1"/>
<g clip-path="url(#cm)">
<line x1="211" y1="228.5" x2="1277" y2="228.5" stroke="#b4b4b4"/>
<line x1="211" y1="207" x2="1277" y2="207" stroke="#c8963a" stroke-width="2" stroke-dasharray="9,6,3,6"/>
<path d="M211.5,235V250M209.0,243.5H211.5M211.5,244.5H214.0M219.5,237V261M217.0,244.5H219.5M219.5,250.5H222.0M227.5,240V252M225.0,250.5H227.5M227.5,247.5H230.0M235.5,234V250M233.0,247.5H235.5M235.5,241.5H238.0M243.5,237V248M241.0,241.5H243.5M243.5,248.5H246.0M251.5,224V252M249.0,248.5H251.5M251.5,224.5H254.0M259.5,213V226M257.0,224.5H259.5M259.5,214.5H262.0M267.5,204V214M265.0,214.5H267.5M267.5,206.5H270.0M275.5,190V206M273.0,206.5H275.5M275.5,196.5H278.0M283.5,191V200M281.0,196.5H283.5M283.5,194.5H286.0M291.5,190V199M289.0,194.5H291.5M291.5,193.5H294.0M299.5,190V196M297.0,193.5H299.5M299.5,195.5H302.0M307.5,191V199M305.0,195.5H307.5M307.5,199.5H310.0M315.5,195V202M313.0,199.5H315.5M315.5,201.5H318.0M323.5,197V205M321.0,201.5H323.5M323.5,205.5H326.0M331.5,202V208M329.0,205.5H331.5M331.5,206.5H334.0M339.5,203V208M337.0,206.5H339.5M339.5,205.5H342.0M347.5,203V207M345.0,205.5H347.5M347.5,206.5H350.0M355.5,204V208M353.0,206.5H355.5M355.5,204.5H358.0M363.5,199V207M361.0,204.5H363.5M363.5,201.5H366.0M371.5,199V204M369.0,201.5H371.5M371.5,201.5H374.0M379.5,199V203M377.0,201.5H379.5M379.5,201.5H382.0M387.5,199V204M385.0,201.5H387.5M387.5,200.5H390.0M395.5,196V204M393.0,200.5H395.5M395.5,202.5H398.0M403.5,199V205M401.0,202.5H403.5M403.5,201.5H406.0M411.5,194V207M409.0,201.5H411.5M411.5,198.5H414.0M419.5,194V202M417.0,198.5H419.5M419.5,200.5H422.0M427.5,199V202M425.0,200.5H427.5M427.5,199.5H430.0M435.5,196V201M433.0,199.5H435.5M435.5,198.5H438.0M443.5,196V199M441.0,198.5H443.5M443.5,197.5H446.0M451.5,194V199M449.0,197.5H451.5M451.5,196.5H454.0M459.5,194V198M457.0,196.5H459.5M459.5,197.5H462.0M467.5,195V199M465.0,197.5H467.5M467.5,199.5H470.0M475.5,196V201M473.0,199.5H475.5M475.5,200.5H478.0M483.5,196V204M481.0,200.5H483.5M483.5,199.5H486.0M491.5,194V204M489.0,199.5H491.5M491.5,194.5H494.0M499.5,182V199M497.0,194.5H499.5M499.5,196.5H502.0M507.5,188V204M505.0,196.5H507.5M507.5,204.5H510.0M515.5,195V219M513.0,204.5H515.5M515.5,207.5H518.0M523.5,200V213M521.0,207.5H523.5M523.5,208.5H526.0M531.5,202V215M529.0,208.5H531.5M531.5,213.5H534.0M539.5,209V217M537.0,213.5H539.5M539.5,217.5H542.0M547.5,217V232M545.0,217.5H547.5M547.5,230.5H550.0M555.5,229V242M553.0,230.5H555.5M555.5,242.5H558.0M563.5,234V241M561.0,241.5H563.5M563.5,240.5H566.0M571.5,224V241M569.0,240.5H571.5M571.5,234.5H574.0M579.5,228V240M577.0,234.5H579.5M579.5,230.5H582.0M587.5,224V232M585.0,230.5H587.5M587.5,226.5H590.0M595.5,217V228M593.0,226.5H595.5M595.5,223.5H598.0M603.5,217V228M601.0,223.5H603.5M603.5,226.5H606.0M611.5,222V235M609.0,226.5H611.5M611.5,222.5H614.0M619.5,209V223M617.0,222.5H619.5M619.5,217.5H622.0M627.5,209V226M625.0,217.5H627.5M627.5,226.5H630.0M635.5,219V242M633.0,226.5H635.5M635.5,232.5H638.0M643.5,226V239M641.0,232.5H643.5M643.5,237.5H646.0M651.5,232V243M649.0,237.5H651.5M651.5,243.5H654.0M659.5,237V250M657.0,243.5H659.5M659.5,245.5H662.0M667.5,239V251M665.0,245.5H667.5M667.5,247.5H670.0M675.5,240V253M673.0,247.5H675.5M675.5,248.5H678.0M683.5,244V253M681.0,248.5H683.5M683.5,244.5H686.0M691.5,237V249M689.0,244.5H691.5M691.5,239.5H694.0M699.5,235V242M697.0,239.5H699.5M699.5,240.5H702.0M707.5,235V244M705.0,240.5H707.5M707.5,239.5H710.0M715.5,236V242M713.0,239.5H715.5M715.5,239.5H718.0M723.5,237V240M721.0,239.5H723.5M723.5,240.5H726.0M731.5,237V244M729.0,240.5H731.5M731.5,241.5H734.0M739.5,238V244M737.0,241.5H739.5M739.5,242.5H742.0M747.5,240V243M745.0,242.5H747.5M747.5,242.5H750.0M755.5,241V244M753.0,242.5H755.5M755.5,241.5H758.0M763.5,239V244M761.0,241.5H763.5M763.5,239.5H766.0M771.5,235V240M769.0,239.5H771.5M771.5,236.5H774.0M779.5,234V239M777.0,236.5H779.5M779.5,234.5H782.0M787.5,230V238M785.0,234.5H787.5M787.5,232.5H790.0M795.5,230V235M793.0,232.5H795.5M795.5,233.5H798.0M803.5,232V235M801.0,233.5H803.5M803.5,232.5H806.0M811.5,230V234M809.0,232.5H811.5M811.5,233.5H814.0M819.5,230V235M817.0,233.5H819.5M819.5,232.5H822.0M827.5,230V235M825.0,232.5H827.5M827.5,235.5H830.0M835.5,234V241M833.0,235.5H835.5M835.5,240.5H838.0M843.5,237V242M841.0,240.5H843.5M843.5,237.5H846.0M851.5,224V240M849.0,237.5H851.5M851.5,228.5H854.0M859.5,224V231M857.0,228.5H859.5M859.5,225.5H862.0M867.5,220V230M865.0,225.5H867.5M867.5,230.5H870.0M875.5,226V235M873.0,230.5H875.5M875.5,227.5H878.0M883.5,221V234M881.0,227.5H883.5M883.5,231.5H886.0M891.5,222V240M889.0,231.5H891.5M891.5,240.5H894.0M899.5,233V250M897.0,240.5H899.5M899.5,249.5H902.0M907.5,244V254M905.0,249.5H907.5M907.5,251.5H910.0M915.5,247V255M913.0,251.5H915.5M915.5,250.5H918.0M923.5,248V253M921.0,250.5H923.5M923.5,248.5H926.0M931.5,242V251M929.0,248.5H931.5M931.5,242.5H934.0M939.5,227V242M937.0,242.5H939.5M939.5,230.5H942.0M947.5,224V235M945.0,230.5H947.5M947.5,233.5H950.0M955.5,224V241M953.0,233.5H955.5M955.5,224.5H958.0M963.5,172V242M961.0,224.5H963.5M963.5,191.5H966.0M971.5,182V199M969.0,191.5H971.5M971.5,182.5H974.0M979.5,164V188M977.0,182.5H979.5M979.5,167.5H982.0M987.5,160V173M985.0,167.5H987.5M987.5,160.5H990.0M995.5,146V165M993.0,160.5H995.5M995.5,156.5H998.0M1003.5,150V162M1001.0,156.5H1003.5M1003.5,162.5H1006.0M1011.5,159V174M1009.0,162.5H1011.5M1011.5,174.5H1014.0M1019.5,167V184M1017.0,174.5H1019.5M1019.5,184.5H1022.0M1027.5,176V221M1025.0,184.5H1027.5M1027.5,211.5H1030.0M1035.5,201V221M1033.0,211.5H1035.5M1035.5,221.5H1038.0M1043.5,214V234M1041.0,221.5H1043.5M1043.5,222.5H1046.0M1051.5,213V230M1049.0,222.5H1051.5M1051.5,228.5H1054.0" stroke="#33d033" stroke-width="1" fill="none"/>
<path d="M261.5,230 L267.5,223 L273.5,230 L269.5,230 L269.5,237 L265.5,237 L265.5,230 Z" fill="#1e90ff"/>
<path d="M405.5,212 L411.5,205 L417.5,212 L413.5,212 L413.5,218 L409.5,218 L409.5,212 Z" fill="#1e90ff"/>
<path d="M445.5,206.4 L451.5,199.4 L457.5,206.4 L453.5,206.4 L453.5,211.7 L449.5,211.7 L449.5,206.4 Z" fill="#1e90ff"/>
<path d="M477.5,190.8 L483.5,197.8 L489.5,190.8 L485.5,190.8 L485.5,184.7 L481.5,184.7 L481.5,190.8 Z" fill="#ffffff"/>
<path d="M509.5,191 L515.5,198 L521.5,191 L517.5,191 L517.5,185 L513.5,185 L513.5,191 Z" fill="#ffffff"/>
<path d="M613.5,235.8 L619.5,228.8 L625.5,235.8 L621.5,235.8 L621.5,242.7 L617.5,242.7 L617.5,235.8 Z" fill="#1e90ff"/>
<path d="M645.5,218.6 L651.5,225.6 L657.5,218.6 L653.5,218.6 L653.5,212 L649.5,212 L649.5,218.6 Z" fill="#ffffff"/>
<path d="M781.5,245.6 L787.5,238.6 L793.5,245.6 L789.5,245.6 L789.5,251 L785.5,251 L785.5,245.6 Z" fill="#1e90ff"/>
<path d="M829.5,226.7 L835.5,233.7 L841.5,226.7 L837.5,226.7 L837.5,221.5 L833.5,221.5 L833.5,226.7 Z" fill="#ffffff"/>
<path d="M861.5,235.3 L867.5,228.3 L873.5,235.3 L869.5,235.3 L869.5,240.8 L865.5,240.8 L865.5,235.3 Z" fill="#1e90ff"/>
<path d="M893.5,224.2 L899.5,231.2 L905.5,224.2 L901.5,224.2 L901.5,217.7 L897.5,217.7 L897.5,224.2 Z" fill="#ffffff"/>
<path d="M941.5,244.9 L947.5,237.9 L953.5,244.9 L949.5,244.9 L949.5,252.3 L945.5,252.3 L945.5,244.9 Z" fill="#1e90ff"/>
<path d="M957.5,255.5 L963.5,248.5 L969.5,255.5 L965.5,255.5 L965.5,263 L961.5,263 L961.5,255.5 Z" fill="#1e90ff"/>
<path d="M1021.5,156.7 L1027.5,163.7 L1033.5,156.7 L1029.5,156.7 L1029.5,149.3 L1025.5,149.3 L1025.5,156.7 Z" fill="#ffffff"/>
<rect x="1050" y="206" width="8" height="1" fill="#ffffff"/>
</g>
<path d="M214,134 L221,134 L217.5,138 Z" fill="#fff"/>
<text x="226" y="139" fill="#fff" font-size="10" letter-spacing="-0.4">GBPUSD,M30&#160; 1.39245 1.39306 1.38969 1.38991</text>
<text x="1257.5" y="141" fill="#fff" font-size="10" letter-spacing="-0.35" text-anchor="end">ProFx_v.5.0.1_EA_nmc_v2_H4_Direction</text>
<circle cx="1266.5" cy="136.5" r="5" fill="none" stroke="#fff" stroke-width="1"/><circle cx="1264.5" cy="135" r="0.8" fill="#fff"/><circle cx="1268.5" cy="135" r="0.8" fill="#fff"/><path d="M1263.5,138 Q1266.5,141 1269.5,138" stroke="#fff" fill="none"/>
<path d="M1058,127 L1066,127 L1062,132 Z" fill="#a0a0a8"/>
<text x="1009" y="168" fill="#fff" font-family="Liberation Mono, monospace" font-size="11.6">Bar closes in: 8 minutes 7 seconds</text>
<text x="217" y="204.5" fill="#fff" font-size="10" letter-spacing="-0.4">#7190087 sell 0.03</text>
<line x1="1278" y1="141.5" x2="1281" y2="141.5" stroke="#c8c8c8"/>
<text x="1284" y="145" fill="#fff" font-size="10" letter-spacing="-0.55">1.40790</text>
<line x1="1278" y1="173.5" x2="1281" y2="173.5" stroke="#c8c8c8"/>
<text x="1284" y="177" fill="#fff" font-size="10" letter-spacing="-0.55">1.40110</text>
<line x1="1278" y1="206.5" x2="1281" y2="206.5" stroke="#c8c8c8"/>
<text x="1284" y="210" fill="#fff" font-size="10" letter-spacing="-0.55">1.39450</text>
<line x1="1278" y1="240.5" x2="1281" y2="240.5" stroke="#c8c8c8"/>
<text x="1284" y="244" fill="#fff" font-size="10" letter-spacing="-0.55">1.38770</text>
<line x1="1278" y1="272.5" x2="1281" y2="272.5" stroke="#c8c8c8"/>
<text x="1284" y="276" fill="#fff" font-size="10" letter-spacing="-0.55">1.38110</text>
<rect x="1280" y="222" width="40" height="13" fill="#fff"/><text x="1284" y="232" fill="#000" font-size="10" letter-spacing="-0.55">1.38991</text>
<g clip-path="url(#cs)">
<line x1="211" y1="288.5" x2="1277" y2="288.5" stroke="#c8c8c8" stroke-dasharray="4,3"/>
<line x1="211" y1="314.5" x2="1277" y2="314.5" stroke="#c8c8c8" stroke-dasharray="4,3"/>
<line x1="211" y1="340.5" x2="1277" y2="340.5" stroke="#c8c8c8" stroke-dasharray="4,3"/>
<rect x="211" y="314.0" width="4" height="32.0" fill="#ffffff"/>
<rect x="216" y="314.0" width="7" height="32.0" fill="#ffffff"/>
<rect x="224" y="314.0" width="7" height="32.0" fill="#1e90ff"/>
<rect x="232" y="314.0" width="7" height="31.0" fill="#1e90ff"/>
<rect x="240" y="314.0" width="7" height="29.6" fill="#1e90ff"/>
<rect x="248" y="314.0" width="7" height="24.7" fill="#1e90ff"/>
<rect x="256" y="314.0" width="7" height="16.6" fill="#1e90ff"/>
<rect x="264" y="314.0" width="7" height="1.0" fill="#1e90ff"/>
<rect x="272" y="301.0" width="7" height="13.0" fill="#1e90ff"/>
<rect x="280" y="290.5" width="7" height="23.5" fill="#1e90ff"/>
<rect x="288" y="287.3" width="7" height="26.7" fill="#1e90ff"/>
<rect x="296" y="284.0" width="7" height="30.0" fill="#1e90ff"/>
<rect x="304" y="283.0" width="7" height="31.0" fill="#a8a8a8"/>
<rect x="312" y="286.4" width="7" height="27.6" fill="#ffffff"/>
<rect x="320" y="289.7" width="7" height="24.3" fill="#ffffff"/>
<rect x="328" y="291.3" width="7" height="22.7" fill="#ffffff"/>
<rect x="336" y="293.8" width="7" height="20.2" fill="#ffffff"/>
<rect x="344" y="296.2" width="7" height="17.8" fill="#ffffff"/>
<rect x="352" y="298.7" width="7" height="15.3" fill="#ffffff"/>
<rect x="360" y="302.0" width="7" height="12.0" fill="#ffffff"/>
<rect x="368" y="307.7" width="7" height="6.3" fill="#ffffff"/>
<rect x="376" y="311.8" width="7" height="2.2" fill="#ffffff"/>
<rect x="384" y="314.0" width="7" height="7.6" fill="#ffffff"/>
<rect x="392" y="314.0" width="7" height="9.2" fill="#ffffff"/>
<rect x="400" y="314.0" width="7" height="12.5" fill="#ffffff"/>
<rect x="408" y="314.0" width="7" height="8.4" fill="#1e90ff"/>
<rect x="416" y="314.0" width="7" height="4.3" fill="#1e90ff"/>
<rect x="424" y="306.0" width="7" height="8.0" fill="#1e90ff"/>
<rect x="432" y="305.0" width="7" height="9.0" fill="#1e90ff"/>
<rect x="440" y="302.8" width="7" height="11.2" fill="#1e90ff"/>
<rect x="448" y="296.2" width="7" height="17.8" fill="#1e90ff"/>
<rect x="456" y="290.5" width="7" height="23.5" fill="#1e90ff"/>
<rect x="464" y="288.0" width="7" height="26.0" fill="#1e90ff"/>
<rect x="472" y="288.0" width="7" height="26.0" fill="#a8a8a8"/>
<rect x="480" y="302.0" width="7" height="12.0" fill="#ffffff"/>
<rect x="488" y="304.4" width="7" height="9.6" fill="#ffffff"/>
<rect x="496" y="302.8" width="7" height="11.2" fill="#1e90ff"/>
<rect x="504" y="300.8" width="7" height="13.2" fill="#1e90ff"/>
<rect x="512" y="314.0" width="7" height="5.0" fill="#ffffff"/>
<rect x="520" y="314.0" width="7" height="16.6" fill="#ffffff"/>
<rect x="528" y="314.0" width="7" height="23.0" fill="#ffffff"/>
<rect x="536" y="314.0" width="7" height="24.0" fill="#ffffff"/>
<rect x="544" y="314.0" width="7" height="29.6" fill="#ffffff"/>
<rect x="552" y="314.0" width="7" height="32.0" fill="#ffffff"/>
<rect x="560" y="314.0" width="7" height="32.0" fill="#ffffff"/>
<rect x="568" y="314.0" width="7" height="32.0" fill="#1e90ff"/>
<rect x="576" y="314.0" width="7" height="26.4" fill="#1e90ff"/>
<rect x="584" y="314.0" width="7" height="23.0" fill="#1e90ff"/>
<rect x="592" y="314.0" width="7" height="16.6" fill="#1e90ff"/>
<rect x="600" y="314.0" width="7" height="13.3" fill="#1e90ff"/>
<rect x="608" y="314.0" width="7" height="9.2" fill="#1e90ff"/>
<rect x="616" y="314.0" width="7" height="4.3" fill="#1e90ff"/>
<rect x="624" y="311.0" width="7" height="3.0" fill="#1e90ff"/>
<rect x="632" y="312.6" width="7" height="1.4" fill="#1e90ff"/>
<rect x="640" y="314.0" width="7" height="7.6" fill="#ffffff"/>
<rect x="648" y="314.0" width="7" height="18.2" fill="#ffffff"/>
<rect x="656" y="314.0" width="7" height="23.0" fill="#ffffff"/>
<rect x="664" y="314.0" width="7" height="27.2" fill="#ffffff"/>
<rect x="672" y="314.0" width="7" height="31.3" fill="#ffffff"/>
<rect x="680" y="314.0" width="7" height="30.5" fill="#a8a8a8"/>
<rect x="688" y="314.0" width="7" height="25.6" fill="#1e90ff"/>
<rect x="696" y="314.0" width="7" height="19.0" fill="#1e90ff"/>
<rect x="704" y="314.0" width="7" height="13.3" fill="#1e90ff"/>
<rect x="712" y="314.0" width="7" height="10.9" fill="#1e90ff"/>
<rect x="720" y="314.0" width="7" height="10.0" fill="#1e90ff"/>
<rect x="728" y="314.0" width="7" height="8.4" fill="#1e90ff"/>
<rect x="736" y="314.0" width="7" height="6.0" fill="#1e90ff"/>
<rect x="744" y="314.0" width="7" height="1.0" fill="#1e90ff"/>
<rect x="752" y="309.3" width="7" height="4.7" fill="#1e90ff"/>
<rect x="760" y="306.0" width="7" height="8.0" fill="#1e90ff"/>
<rect x="768" y="297.0" width="7" height="17.0" fill="#1e90ff"/>
<rect x="776" y="289.7" width="7" height="24.3" fill="#1e90ff"/>
<rect x="784" y="286.1" width="7" height="27.9" fill="#1e90ff"/>
<rect x="792" y="287.3" width="7" height="26.7" fill="#a8a8a8"/>
<rect x="800" y="289.0" width="7" height="25.0" fill="#ffffff"/>
<rect x="808" y="292.2" width="7" height="21.8" fill="#ffffff"/>
<rect x="816" y="293.8" width="7" height="20.2" fill="#ffffff"/>
<rect x="824" y="294.6" width="7" height="19.4" fill="#ffffff"/>
<rect x="832" y="303.6" width="7" height="10.4" fill="#ffffff"/>
<rect x="840" y="314.0" width="7" height="3.5" fill="#ffffff"/>
<rect x="848" y="312.6" width="7" height="1.4" fill="#1e90ff"/>
<rect x="856" y="300.3" width="7" height="13.7" fill="#1e90ff"/>
<rect x="864" y="288.0" width="7" height="26.0" fill="#1e90ff"/>
<rect x="872" y="290.5" width="7" height="23.5" fill="#a8a8a8"/>
<rect x="880" y="293.0" width="7" height="21.0" fill="#ffffff"/>
<rect x="888" y="304.4" width="7" height="9.6" fill="#ffffff"/>
<rect x="896" y="314.0" width="7" height="6.8" fill="#ffffff"/>
<rect x="904" y="314.0" width="7" height="26.4" fill="#ffffff"/>
<rect x="912" y="314.0" width="7" height="30.5" fill="#ffffff"/>
<rect x="920" y="314.0" width="7" height="28.0" fill="#a8a8a8"/>
<rect x="928" y="314.0" width="7" height="23.0" fill="#1e90ff"/>
<rect x="936" y="314.0" width="7" height="8.4" fill="#1e90ff"/>
<rect x="944" y="304.4" width="7" height="9.6" fill="#1e90ff"/>
<rect x="952" y="298.7" width="7" height="15.3" fill="#1e90ff"/>
<rect x="960" y="292.2" width="7" height="21.8" fill="#1e90ff"/>
<rect x="968" y="288.0" width="7" height="26.0" fill="#1e90ff"/>
<rect x="976" y="284.8" width="7" height="29.2" fill="#1e90ff"/>
<rect x="984" y="282.4" width="7" height="31.6" fill="#1e90ff"/>
<rect x="992" y="282.4" width="7" height="31.6" fill="#1e90ff"/>
<rect x="1000" y="283.2" width="7" height="30.8" fill="#ffffff"/>
<rect x="1008" y="284.0" width="7" height="30.0" fill="#ffffff"/>
<rect x="1016" y="289.7" width="7" height="24.3" fill="#ffffff"/>
<rect x="1024" y="300.3" width="7" height="13.7" fill="#ffffff"/>
<rect x="1032" y="313.0" width="7" height="1.0" fill="#ffffff"/>
<rect x="1040" y="314.0" width="7" height="11.7" fill="#ffffff"/>
<rect x="1048" y="314.0" width="7" height="17.4" fill="#ffffff"/>
<polyline points="211.5,346.0 219.5,346.0 227.5,346.0 235.5,345.0 243.5,343.6 251.5,338.7 259.5,330.6 267.5,315.0 275.5,301.0 283.5,290.5 291.5,287.3 299.5,284.0 307.5,283.0 315.5,286.4 323.5,289.7 331.5,291.3 339.5,293.8 347.5,296.2 355.5,298.7 363.5,302.0 371.5,307.7 379.5,311.8 387.5,321.6 395.5,323.2 403.5,326.5 411.5,322.4 419.5,318.3 427.5,306.0 435.5,305.0 443.5,302.8 451.5,296.2 459.5,290.5 467.5,288.0 475.5,288.0 483.5,302.0 491.5,304.4 499.5,302.8 507.5,300.8 515.5,319.0 523.5,330.6 531.5,337.0 539.5,338.0 547.5,343.6 555.5,346.0 563.5,346.0 571.5,346.0 579.5,340.4 587.5,337.0 595.5,330.6 603.5,327.3 611.5,323.2 619.5,318.3 627.5,311.0 635.5,312.6 643.5,321.6 651.5,332.2 659.5,337.0 667.5,341.2 675.5,345.3 683.5,344.5 691.5,339.6 699.5,333.0 707.5,327.3 715.5,324.9 723.5,324.0 731.5,322.4 739.5,320.0 747.5,315.0 755.5,309.3 763.5,306.0 771.5,297.0 779.5,289.7 787.5,286.1 795.5,287.3 803.5,289.0 811.5,292.2 819.5,293.8 827.5,294.6 835.5,303.6 843.5,317.5 851.5,312.6 859.5,300.3 867.5,288.0 875.5,290.5 883.5,293.0 891.5,304.4 899.5,320.8 907.5,340.4 915.5,344.5 923.5,342.0 931.5,337.0 939.5,322.4 947.5,304.4 955.5,298.7 963.5,292.2 971.5,288.0 979.5,284.8 987.5,282.4 995.5,282.4 1003.5,283.2 1011.5,284.0 1019.5,289.7 1027.5,300.3 1035.5,313.0 1043.5,325.7 1051.5,331.4" fill="none" stroke="#9fd4f5" stroke-width="1"/>
<polyline points="211.5,346.0 219.5,346.0 227.5,346.0 235.5,345.8 243.5,345.3 251.5,343.9 259.5,341.0 267.5,335.1 275.5,326.8 283.5,317.3 291.5,308.7 299.5,301.3 307.5,295.6 315.5,292.0 323.5,290.5 331.5,290.2 339.5,290.8 347.5,292.0 355.5,293.6 363.5,295.7 371.5,298.7 379.5,302.1 387.5,306.8 395.5,311.4 403.5,315.7 411.5,318.3 419.5,319.1 427.5,316.9 435.5,313.9 443.5,310.9 451.5,307.2 459.5,302.8 467.5,298.7 475.5,295.4 483.5,295.6 491.5,297.3 499.5,298.9 507.5,299.8 515.5,303.7 523.5,310.0 531.5,317.1 539.5,323.3 547.5,329.0 555.5,334.1 563.5,337.9 571.5,340.6 579.5,341.4 587.5,340.8 595.5,338.7 603.5,335.9 611.5,332.6 619.5,328.9 627.5,324.3 635.5,320.7 643.5,319.7 651.5,321.8 659.5,325.3 667.5,329.4 675.5,333.7 683.5,337.1 691.5,338.6 699.5,338.0 707.5,335.8 715.5,333.0 723.5,330.5 731.5,328.1 739.5,325.9 747.5,323.1 755.5,319.6 763.5,316.0 771.5,311.2 779.5,305.7 787.5,300.2 795.5,296.1 803.5,293.5 811.5,292.4 819.5,292.3 827.5,292.7 835.5,294.9 843.5,299.9 851.5,303.9 859.5,304.4 867.5,301.5 875.5,298.5 883.5,296.5 891.5,297.4 899.5,302.1 907.5,310.9 915.5,320.0 923.5,327.0 931.5,331.0 939.5,330.7 947.5,325.6 955.5,318.9 963.5,311.7 971.5,305.0 979.5,299.1 987.5,294.1 995.5,290.3 1003.5,287.8 1011.5,286.3 1019.5,286.5 1027.5,289.2 1035.5,294.5 1043.5,302.1 1051.5,310.0" fill="none" stroke="#d8d8d8" stroke-width="1"/>
</g>
<text x="214" y="290" fill="#fff" font-size="10" letter-spacing="-0.35">ProFx Stoch(14,3,3,1,SMA,0,3) -25.760390 -25.760390 -13.765257</text>
<g clip-path="url(#ct)">
<line x1="211" y1="386.5" x2="1277" y2="386.5" stroke="#c8c8c8" stroke-dasharray="4,3"/>
<rect x="211" y="386.0" width="4" height="29.4" fill="#ffffff"/>
<rect x="216" y="386.0" width="7" height="32.6" fill="#ffffff"/>
<rect x="224" y="386.0" width="7" height="35.0" fill="#ffffff"/>
<rect x="232" y="386.0" width="7" height="35.0" fill="#ffffff"/>
<rect x="240" y="386.0" width="7" height="32.6" fill="#a8a8a8"/>
<rect x="248" y="386.0" width="7" height="29.4" fill="#1e90ff"/>
<rect x="256" y="386.0" width="7" height="18.8" fill="#1e90ff"/>
<rect x="264" y="386.0" width="7" height="7.8" fill="#1e90ff"/>
<rect x="272" y="381.9" width="7" height="4.1" fill="#1e90ff"/>
<rect x="280" y="374.2" width="7" height="11.8" fill="#1e90ff"/>
<rect x="288" y="366.3" width="7" height="19.7" fill="#1e90ff"/>
<rect x="296" y="362.3" width="7" height="23.7" fill="#1e90ff"/>
<rect x="304" y="359.8" width="7" height="26.2" fill="#1e90ff"/>
<rect x="312" y="359.8" width="7" height="26.2" fill="#1e90ff"/>
<rect x="320" y="361.4" width="7" height="24.6" fill="#a8a8a8"/>
<rect x="328" y="363.0" width="7" height="23.0" fill="#ffffff"/>
<rect x="336" y="369.3" width="7" height="16.7" fill="#ffffff"/>
<rect x="344" y="375.3" width="7" height="10.7" fill="#ffffff"/>
<rect x="352" y="383.5" width="7" height="2.5" fill="#ffffff"/>
<rect x="360" y="386.0" width="7" height="4.9" fill="#ffffff"/>
<rect x="368" y="386.0" width="7" height="8.1" fill="#ffffff"/>
<rect x="376" y="386.0" width="7" height="8.1" fill="#ffffff"/>
<rect x="384" y="386.0" width="7" height="5.7" fill="#a8a8a8"/>
<rect x="392" y="386.0" width="7" height="4.0" fill="#1e90ff"/>
<rect x="400" y="386.0" width="7" height="1.0" fill="#1e90ff"/>
<rect x="408" y="385.0" width="7" height="1.0" fill="#1e90ff"/>
<rect x="416" y="383.5" width="7" height="2.5" fill="#1e90ff"/>
<rect x="424" y="383.5" width="7" height="2.5" fill="#1e90ff"/>
<rect x="432" y="382.7" width="7" height="3.3" fill="#1e90ff"/>
<rect x="440" y="382.7" width="7" height="3.3" fill="#1e90ff"/>
<rect x="448" y="381.0" width="7" height="5.0" fill="#1e90ff"/>
<rect x="456" y="380.2" width="7" height="5.8" fill="#1e90ff"/>
<rect x="464" y="379.0" width="7" height="7.0" fill="#1e90ff"/>
<rect x="472" y="378.0" width="7" height="8.0" fill="#1e90ff"/>
<rect x="480" y="379.0" width="7" height="7.0" fill="#ffffff"/>
<rect x="488" y="381.9" width="7" height="4.1" fill="#ffffff"/>
<rect x="496" y="383.5" width="7" height="2.5" fill="#ffffff"/>
<rect x="504" y="383.5" width="7" height="2.5" fill="#ffffff"/>
<rect x="512" y="386.0" width="7" height="1.6" fill="#ffffff"/>
<rect x="520" y="386.0" width="7" height="4.9" fill="#ffffff"/>
<rect x="528" y="386.0" width="7" height="9.0" fill="#ffffff"/>
<rect x="536" y="386.0" width="7" height="11.4" fill="#ffffff"/>
<rect x="544" y="386.0" width="7" height="14.7" fill="#ffffff"/>
<rect x="552" y="386.0" width="7" height="17.1" fill="#ffffff"/>
<rect x="560" y="386.0" width="7" height="21.2" fill="#ffffff"/>
<rect x="568" y="386.0" width="7" height="24.2" fill="#ffffff"/>
<rect x="576" y="386.0" width="7" height="24.2" fill="#ffffff"/>
<rect x="584" y="386.0" width="7" height="21.2" fill="#a8a8a8"/>
<rect x="592" y="386.0" width="7" height="18.8" fill="#1e90ff"/>
<rect x="600" y="386.0" width="7" height="13.9" fill="#1e90ff"/>
<rect x="608" y="386.0" width="7" height="8.1" fill="#1e90ff"/>
<rect x="616" y="386.0" width="7" height="1.0" fill="#1e90ff"/>
<rect x="624" y="379.7" width="7" height="6.3" fill="#1e90ff"/>
<rect x="632" y="379.0" width="7" height="7.0" fill="#1e90ff"/>
<rect x="640" y="383.0" width="7" height="3.0" fill="#a8a8a8"/>
<rect x="648" y="386.0" width="7" height="1.6" fill="#ffffff"/>
<rect x="656" y="386.0" width="7" height="4.9" fill="#ffffff"/>
<rect x="664" y="386.0" width="7" height="9.0" fill="#ffffff"/>
<rect x="672" y="386.0" width="7" height="13.0" fill="#ffffff"/>
<rect x="680" y="386.0" width="7" height="16.3" fill="#ffffff"/>
<rect x="688" y="386.0" width="7" height="16.3" fill="#ffffff"/>
<rect x="696" y="386.0" width="7" height="14.7" fill="#a8a8a8"/>
<rect x="704" y="386.0" width="7" height="12.2" fill="#1e90ff"/>
<rect x="712" y="386.0" width="7" height="8.1" fill="#1e90ff"/>
<rect x="720" y="386.0" width="7" height="4.9" fill="#1e90ff"/>
<rect x="728" y="386.0" width="7" height="1.0" fill="#1e90ff"/>
<rect x="736" y="384.3" width="7" height="1.7" fill="#1e90ff"/>
<rect x="744" y="383.5" width="7" height="2.5" fill="#1e90ff"/>
<rect x="752" y="385.5" width="7" height="1.0" fill="#1e90ff"/>
<rect x="760" y="385.5" width="7" height="1.0" fill="#1e90ff"/>
<rect x="768" y="385.5" width="7" height="1.0" fill="#1e90ff"/>
<rect x="776" y="382.7" width="7" height="3.3" fill="#1e90ff"/>
<rect x="784" y="377.8" width="7" height="8.2" fill="#1e90ff"/>
<rect x="792" y="373.7" width="7" height="12.3" fill="#1e90ff"/>
<rect x="800" y="372.0" width="7" height="14.0" fill="#1e90ff"/>
<rect x="808" y="371.2" width="7" height="14.8" fill="#1e90ff"/>
<rect x="816" y="371.2" width="7" height="14.8" fill="#1e90ff"/>
<rect x="824" y="371.2" width="7" height="14.8" fill="#a8a8a8"/>
<rect x="832" y="374.5" width="7" height="11.5" fill="#ffffff"/>
<rect x="840" y="380.2" width="7" height="5.8" fill="#ffffff"/>
<rect x="848" y="384.3" width="7" height="1.7" fill="#ffffff"/>
<rect x="856" y="383.5" width="7" height="2.5" fill="#1e90ff"/>
<rect x="864" y="381.0" width="7" height="5.0" fill="#1e90ff"/>
<rect x="872" y="379.4" width="7" height="6.6" fill="#1e90ff"/>
<rect x="880" y="378.0" width="7" height="8.0" fill="#1e90ff"/>
<rect x="888" y="379.4" width="7" height="6.6" fill="#a8a8a8"/>
<rect x="896" y="383.5" width="7" height="2.5" fill="#ffffff"/>
<rect x="904" y="386.0" width="7" height="4.9" fill="#ffffff"/>
<rect x="912" y="386.0" width="7" height="10.6" fill="#ffffff"/>
<rect x="920" y="386.0" width="7" height="13.0" fill="#ffffff"/>
<rect x="928" y="386.0" width="7" height="14.7" fill="#ffffff"/>
<rect x="936" y="386.0" width="7" height="12.2" fill="#a8a8a8"/>
<rect x="944" y="386.0" width="7" height="8.1" fill="#1e90ff"/>
<rect x="952" y="386.0" width="7" height="1.0" fill="#1e90ff"/>
<rect x="960" y="379.4" width="7" height="6.6" fill="#1e90ff"/>
<rect x="968" y="372.9" width="7" height="13.1" fill="#1e90ff"/>
<rect x="976" y="366.3" width="7" height="19.7" fill="#1e90ff"/>
<rect x="984" y="361.4" width="7" height="24.6" fill="#1e90ff"/>
<rect x="992" y="359.0" width="7" height="27.0" fill="#1e90ff"/>
<rect x="1000" y="357.4" width="7" height="28.6" fill="#1e90ff"/>
<rect x="1008" y="357.4" width="7" height="28.6" fill="#a8a8a8"/>
<rect x="1016" y="359.8" width="7" height="26.2" fill="#ffffff"/>
<rect x="1024" y="366.3" width="7" height="19.7" fill="#ffffff"/>
<rect x="1032" y="377.0" width="7" height="9.0" fill="#ffffff"/>
<rect x="1040" y="386.0" width="7" height="1.6" fill="#ffffff"/>
<rect x="1048" y="386.0" width="7" height="10.6" fill="#ffffff"/>
<polyline points="211.5,415.4 219.5,418.6 227.5,421.0 235.5,421.0 243.5,418.6 251.5,415.4 259.5,404.8 267.5,393.8 275.5,381.9 283.5,374.2 291.5,366.3 299.5,362.3 307.5,359.8 315.5,359.8 323.5,361.4 331.5,363.0 339.5,369.3 347.5,375.3 355.5,383.5 363.5,390.9 371.5,394.1 379.5,394.1 387.5,391.7 395.5,390.0 403.5,386.5 411.5,385.0 419.5,383.5 427.5,383.5 435.5,382.7 443.5,382.7 451.5,381.0 459.5,380.2 467.5,379.0 475.5,378.0 483.5,379.0 491.5,381.9 499.5,383.5 507.5,383.5 515.5,387.6 523.5,390.9 531.5,395.0 539.5,397.4 547.5,400.7 555.5,403.1 563.5,407.2 571.5,410.2 579.5,410.2 587.5,407.2 595.5,404.8 603.5,399.9 611.5,394.1 619.5,386.0 627.5,379.7 635.5,379.0 643.5,383.0 651.5,387.6 659.5,390.9 667.5,395.0 675.5,399.0 683.5,402.3 691.5,402.3 699.5,400.7 707.5,398.2 715.5,394.1 723.5,390.9 731.5,387.0 739.5,384.3 747.5,383.5 755.5,385.5 763.5,385.5 771.5,385.5 779.5,382.7 787.5,377.8 795.5,373.7 803.5,372.0 811.5,371.2 819.5,371.2 827.5,371.2 835.5,374.5 843.5,380.2 851.5,384.3 859.5,383.5 867.5,381.0 875.5,379.4 883.5,378.0 891.5,379.4 899.5,383.5 907.5,390.9 915.5,396.6 923.5,399.0 931.5,400.7 939.5,398.2 947.5,394.1 955.5,387.0 963.5,379.4 971.5,372.9 979.5,366.3 987.5,361.4 995.5,359.0 1003.5,357.4 1011.5,357.4 1019.5,359.8 1027.5,366.3 1035.5,377.0 1043.5,387.6 1051.5,396.6" fill="none" stroke="#9fd4f5" stroke-width="1"/>
<polyline points="211.5,390.8 219.5,397.9 227.5,404.4 235.5,409.6 243.5,412.9 251.5,414.4 259.5,413.1 267.5,409.0 275.5,402.6 283.5,395.2 291.5,387.4 299.5,380.2 307.5,374.1 315.5,369.5 323.5,366.5 331.5,364.9 339.5,365.3 347.5,367.3 355.5,371.0 363.5,375.9 371.5,380.9 379.5,385.0 387.5,387.5 395.5,388.8 403.5,388.7 411.5,388.0 419.5,386.9 427.5,385.9 435.5,385.0 443.5,384.3 451.5,383.4 459.5,382.6 467.5,381.6 475.5,380.6 483.5,380.0 491.5,380.2 499.5,380.9 507.5,381.6 515.5,382.9 523.5,384.9 531.5,387.4 539.5,390.1 547.5,392.9 555.5,395.7 563.5,398.8 571.5,401.9 579.5,404.4 587.5,405.8 595.5,406.0 603.5,404.9 611.5,402.5 619.5,398.6 627.5,393.8 635.5,389.5 643.5,387.0 651.5,386.3 659.5,386.9 667.5,388.7 675.5,391.2 683.5,394.1 691.5,396.5 699.5,398.1 707.5,398.6 715.5,397.9 723.5,396.3 731.5,394.1 739.5,391.5 747.5,389.2 755.5,387.8 763.5,386.9 771.5,386.4 779.5,385.5 787.5,383.8 795.5,381.3 803.5,378.8 811.5,376.6 819.5,374.9 827.5,373.6 835.5,373.4 843.5,374.6 851.5,376.9 859.5,378.8 867.5,379.8 875.5,380.1 883.5,379.7 891.5,379.6 899.5,380.3 907.5,382.5 915.5,385.9 923.5,389.4 931.5,392.7 939.5,394.7 947.5,395.2 955.5,393.8 963.5,390.7 971.5,386.3 979.5,381.1 987.5,375.8 995.5,370.9 1003.5,366.9 1011.5,363.8 1019.5,362.1 1027.5,362.4 1035.5,365.2 1043.5,370.4 1051.5,376.9" fill="none" stroke="#d8d8d8" stroke-width="1"/>
</g>
<text x="214" y="365" fill="#fff" font-size="10" letter-spacing="-0.35">ProFx Strength(11,5,5,CLOSE) -23.0226 -23.0226 16.6109</text>
<rect x="211" y="438" width="44.5" height="8" fill="#ffffff"/>
<rect x="255.5" y="438" width="80.0" height="8" fill="#1e90ff"/>
<rect x="335.5" y="438" width="72.0" height="8" fill="#ffffff"/>
<rect x="407.5" y="438" width="72.0" height="8" fill="#1e90ff"/>
<rect x="479.5" y="438" width="16.0" height="8" fill="#ffffff"/>
<rect x="495.5" y="438" width="8.0" height="8" fill="#1e90ff"/>
<rect x="503.5" y="438" width="112.0" height="8" fill="#ffffff"/>
<rect x="615.5" y="438" width="16.0" height="8" fill="#1e90ff"/>
<rect x="631.5" y="438" width="136.0" height="8" fill="#ffffff"/>
<rect x="767.5" y="438" width="64.0" height="8" fill="#1e90ff"/>
<rect x="831.5" y="438" width="16.0" height="8" fill="#ffffff"/>
<rect x="847.5" y="438" width="40.0" height="8" fill="#1e90ff"/>
<rect x="887.5" y="438" width="48.0" height="8" fill="#ffffff"/>
<rect x="935.5" y="438" width="88.0" height="8" fill="#1e90ff"/>
<rect x="1023.5" y="438" width="31.5" height="8" fill="#ffffff"/>
<rect x="211" y="452" width="52.5" height="8" fill="#ffffff"/>
<rect x="263.5" y="452" width="136.0" height="8" fill="#1e90ff"/>
<rect x="399.5" y="452" width="8.0" height="8" fill="#ffffff"/>
<rect x="407.5" y="452" width="8.0" height="8" fill="#1e90ff"/>
<rect x="415.5" y="452" width="8.0" height="8" fill="#ffffff"/>
<rect x="423.5" y="452" width="56.0" height="8" fill="#1e90ff"/>
<rect x="479.5" y="452" width="8.0" height="8" fill="#ffffff"/>
<rect x="487.5" y="452" width="16.0" height="8" fill="#1e90ff"/>
<rect x="503.5" y="452" width="112.0" height="8" fill="#ffffff"/>
<rect x="615.5" y="452" width="8.0" height="8" fill="#1e90ff"/>
<rect x="623.5" y="452" width="144.0" height="8" fill="#ffffff"/>
<rect x="767.5" y="452" width="64.0" height="8" fill="#1e90ff"/>
<rect x="831.5" y="452" width="16.0" height="8" fill="#ffffff"/>
<rect x="847.5" y="452" width="40.0" height="8" fill="#1e90ff"/>
<rect x="887.5" y="452" width="48.0" height="8" fill="#ffffff"/>
<rect x="935.5" y="452" width="16.0" height="8" fill="#1e90ff"/>
<rect x="951.5" y="452" width="8.0" height="8" fill="#ffffff"/>
<rect x="959.5" y="452" width="64.0" height="8" fill="#1e90ff"/>
<rect x="1023.5" y="452" width="31.5" height="8" fill="#ffffff"/>
<rect x="211" y="466" width="36.5" height="8" fill="#ffffff"/>
<rect x="247.5" y="466" width="88.0" height="8" fill="#1e90ff"/>
<rect x="335.5" y="466" width="24.0" height="8" fill="#ffffff"/>
<rect x="359.5" y="466" width="40.0" height="8" fill="#1e90ff"/>
<rect x="399.5" y="466" width="8.0" height="8" fill="#ffffff"/>
<rect x="407.5" y="466" width="64.0" height="8" fill="#1e90ff"/>
<rect x="471.5" y="466" width="24.0" height="8" fill="#ffffff"/>
<rect x="495.5" y="466" width="8.0" height="8" fill="#1e90ff"/>
<rect x="503.5" y="466" width="88.0" height="8" fill="#ffffff"/>
<rect x="591.5" y="466" width="56.0" height="8" fill="#1e90ff"/>
<rect x="647.5" y="466" width="40.0" height="8" fill="#ffffff"/>
<rect x="687.5" y="466" width="144.0" height="8" fill="#1e90ff"/>
<rect x="831.5" y="466" width="16.0" height="8" fill="#ffffff"/>
<rect x="847.5" y="466" width="40.0" height="8" fill="#1e90ff"/>
<rect x="887.5" y="466" width="48.0" height="8" fill="#ffffff"/>
<rect x="935.5" y="466" width="80.0" height="8" fill="#1e90ff"/>
<rect x="1015.5" y="466" width="39.5" height="8" fill="#ffffff"/>
<rect x="211" y="480" width="36.5" height="8" fill="#ffffff"/>
<rect x="247.5" y="480" width="72.0" height="8" fill="#1e90ff"/>
<rect x="319.5" y="480" width="48.0" height="8" fill="#ffffff"/>
<rect x="367.5" y="480" width="32.0" height="8" fill="#1e90ff"/>
<rect x="399.5" y="480" width="8.0" height="8" fill="#ffffff"/>
<rect x="407.5" y="480" width="72.0" height="8" fill="#1e90ff"/>
<rect x="479.5" y="480" width="16.0" height="8" fill="#ffffff"/>
<rect x="495.5" y="480" width="16.0" height="8" fill="#1e90ff"/>
<rect x="511.5" y="480" width="80.0" height="8" fill="#ffffff"/>
<rect x="591.5" y="480" width="40.0" height="8" fill="#1e90ff"/>
<rect x="631.5" y="480" width="64.0" height="8" fill="#ffffff"/>
<rect x="695.5" y="480" width="48.0" height="8" fill="#1e90ff"/>
<rect x="743.5" y="480" width="24.0" height="8" fill="#ffffff"/>
<rect x="767.5" y="480" width="64.0" height="8" fill="#1e90ff"/>
<rect x="831.5" y="480" width="16.0" height="8" fill="#ffffff"/>
<rect x="847.5" y="480" width="40.0" height="8" fill="#1e90ff"/>
<rect x="887.5" y="480" width="48.0" height="8" fill="#ffffff"/>
<rect x="935.5" y="480" width="88.0" height="8" fill="#1e90ff"/>
<rect x="1023.5" y="480" width="31.5" height="8" fill="#ffffff"/>
<text x="214" y="440" fill="#fff" font-size="10" letter-spacing="-0.35">ProFx Multi(10,20,12,12,5,8) 2 2 1 1</text>
<text x="1062" y="443" fill="#fff" font-family="Liberation Mono, monospace" font-size="9.5" font-weight="bold" letter-spacing="-0.4">GHL</text>
<text x="1062" y="457" fill="#fff" font-family="Liberation Mono, monospace" font-size="9.5" font-weight="bold" letter-spacing="-0.4">CCI</text>
<text x="1062" y="471" fill="#fff" font-family="Liberation Mono, monospace" font-size="9.5" font-weight="bold" letter-spacing="-0.4">TVI</text>
<text x="1062" y="485" fill="#fff" font-family="Liberation Mono, monospace" font-size="9.5" font-weight="bold" letter-spacing="-0.4">T3</text>
<rect x="211" y="507" width="4" height="62" fill="#ffffff"/>
<rect x="216" y="507" width="7" height="62" fill="#ffffff"/>
<rect x="224" y="507" width="7" height="62" fill="#a8a8a8"/>
<rect x="232" y="507" width="7" height="62" fill="#a8a8a8"/>
<rect x="240" y="507" width="7" height="62" fill="#a8a8a8"/>
<rect x="248" y="507" width="7" height="62" fill="#a8a8a8"/>
<rect x="256" y="507" width="7" height="62" fill="#a8a8a8"/>
<rect x="264" y="507" width="7" height="62" fill="#1e90ff"/>
<rect x="272" y="507" width="7" height="62" fill="#1e90ff"/>
<rect x="280" y="507" width="7" height="62" fill="#1e90ff"/>
<rect x="288" y="507" width="7" height="62" fill="#1e90ff"/>
<rect x="296" y="507" width="7" height="62" fill="#1e90ff"/>
<rect x="304" y="507" width="7" height="62" fill="#1e90ff"/>
<rect x="312" y="507" width="7" height="62" fill="#a8a8a8"/>
<rect x="320" y="507" width="7" height="62" fill="#a8a8a8"/>
<rect x="328" y="507" width="7" height="62" fill="#a8a8a8"/>
<rect x="336" y="507" width="7" height="62" fill="#a8a8a8"/>
<rect x="344" y="507" width="7" height="62" fill="#a8a8a8"/>
<rect x="352" y="507" width="7" height="62" fill="#a8a8a8"/>
<rect x="360" y="507" width="7" height="62" fill="#a8a8a8"/>
<rect x="368" y="507" width="7" height="62" fill="#a8a8a8"/>
<rect x="376" y="507" width="7" height="62" fill="#a8a8a8"/>
<rect x="384" y="507" width="7" height="62" fill="#a8a8a8"/>
<rect x="392" y="507" width="7" height="62" fill="#a8a8a8"/>
<rect x="400" y="507" width="7" height="62" fill="#a8a8a8"/>
<rect x="408" y="507" width="7" height="62" fill="#1e90ff"/>
<rect x="416" y="507" width="7" height="62" fill="#a8a8a8"/>
<rect x="424" y="507" width="7" height="62" fill="#a8a8a8"/>
<rect x="432" y="507" width="7" height="62" fill="#a8a8a8"/>
<rect x="440" y="507" width="7" height="62" fill="#a8a8a8"/>
<rect x="448" y="507" width="7" height="62" fill="#1e90ff"/>
<rect x="456" y="507" width="7" height="62" fill="#1e90ff"/>
<rect x="464" y="507" width="7" height="62" fill="#a8a8a8"/>
<rect x="472" y="507" width="7" height="62" fill="#a8a8a8"/>
<rect x="480" y="507" width="7" height="62" fill="#ffffff"/>
<rect x="488" y="507" width="7" height="62" fill="#a8a8a8"/>
<rect x="496" y="507" width="7" height="62" fill="#a8a8a8"/>
<rect x="504" y="507" width="7" height="62" fill="#a8a8a8"/>
<rect x="512" y="507" width="7" height="62" fill="#ffffff"/>
<rect x="520" y="507" width="7" height="62" fill="#ffffff"/>
<rect x="528" y="507" width="7" height="62" fill="#ffffff"/>
<rect x="536" y="507" width="7" height="62" fill="#ffffff"/>
<rect x="544" y="507" width="7" height="62" fill="#ffffff"/>
<rect x="552" y="507" width="7" height="62" fill="#ffffff"/>
<rect x="560" y="507" width="7" height="62" fill="#ffffff"/>
<rect x="568" y="507" width="7" height="62" fill="#a8a8a8"/>
<rect x="576" y="507" width="7" height="62" fill="#a8a8a8"/>
<rect x="584" y="507" width="7" height="62" fill="#a8a8a8"/>
<rect x="592" y="507" width="7" height="62" fill="#a8a8a8"/>
<rect x="600" y="507" width="7" height="62" fill="#a8a8a8"/>
<rect x="608" y="507" width="7" height="62" fill="#a8a8a8"/>
<rect x="616" y="507" width="7" height="62" fill="#1e90ff"/>
<rect x="624" y="507" width="7" height="62" fill="#a8a8a8"/>
<rect x="632" y="507" width="7" height="62" fill="#a8a8a8"/>
<rect x="640" y="507" width="7" height="62" fill="#a8a8a8"/>
<rect x="648" y="507" width="7" height="62" fill="#ffffff"/>
<rect x="656" y="507" width="7" height="62" fill="#ffffff"/>
<rect x="664" y="507" width="7" height="62" fill="#ffffff"/>
<rect x="672" y="507" width="7" height="62" fill="#ffffff"/>
<rect x="680" y="507" width="7" height="62" fill="#ffffff"/>
<rect x="688" y="507" width="7" height="62" fill="#a8a8a8"/>
<rect x="696" y="507" width="7" height="62" fill="#a8a8a8"/>
<rect x="704" y="507" width="7" height="62" fill="#a8a8a8"/>
<rect x="712" y="507" width="7" height="62" fill="#a8a8a8"/>
<rect x="720" y="507" width="7" height="62" fill="#a8a8a8"/>
<rect x="728" y="507" width="7" height="62" fill="#a8a8a8"/>
<rect x="736" y="507" width="7" height="62" fill="#a8a8a8"/>
<rect x="744" y="507" width="7" height="62" fill="#a8a8a8"/>
<rect x="752" y="507" width="7" height="62" fill="#a8a8a8"/>
<rect x="760" y="507" width="7" height="62" fill="#a8a8a8"/>
<rect x="768" y="507" width="7" height="62" fill="#a8a8a8"/>
<rect x="776" y="507" width="7" height="62" fill="#a8a8a8"/>
<rect x="784" y="507" width="7" height="62" fill="#1e90ff"/>
<rect x="792" y="507" width="7" height="62" fill="#1e90ff"/>
<rect x="800" y="507" width="7" height="62" fill="#a8a8a8"/>
<rect x="808" y="507" width="7" height="62" fill="#a8a8a8"/>
<rect x="816" y="507" width="7" height="62" fill="#a8a8a8"/>
<rect x="824" y="507" width="7" height="62" fill="#a8a8a8"/>
<rect x="832" y="507" width="7" height="62" fill="#ffffff"/>
<rect x="840" y="507" width="7" height="62" fill="#ffffff"/>
<rect x="848" y="507" width="7" height="62" fill="#a8a8a8"/>
<rect x="856" y="507" width="7" height="62" fill="#a8a8a8"/>
<rect x="864" y="507" width="7" height="62" fill="#1e90ff"/>
<rect x="872" y="507" width="7" height="62" fill="#a8a8a8"/>
<rect x="880" y="507" width="7" height="62" fill="#a8a8a8"/>
<rect x="888" y="507" width="7" height="62" fill="#a8a8a8"/>
<rect x="896" y="507" width="7" height="62" fill="#ffffff"/>
<rect x="904" y="507" width="7" height="62" fill="#ffffff"/>
<rect x="912" y="507" width="7" height="62" fill="#ffffff"/>
<rect x="920" y="507" width="7" height="62" fill="#ffffff"/>
<rect x="928" y="507" width="7" height="62" fill="#a8a8a8"/>
<rect x="936" y="507" width="7" height="62" fill="#a8a8a8"/>
<rect x="944" y="507" width="7" height="62" fill="#1e90ff"/>
<rect x="952" y="507" width="7" height="62" fill="#a8a8a8"/>
<rect x="960" y="507" width="7" height="62" fill="#1e90ff"/>
<rect x="968" y="507" width="7" height="62" fill="#1e90ff"/>
<rect x="976" y="507" width="7" height="62" fill="#1e90ff"/>
<rect x="984" y="507" width="7" height="62" fill="#1e90ff"/>
<rect x="992" y="507" width="7" height="62" fill="#1e90ff"/>
<rect x="1000" y="507" width="7" height="62" fill="#a8a8a8"/>
<rect x="1008" y="507" width="7" height="62" fill="#a8a8a8"/>
<rect x="1016" y="507" width="7" height="62" fill="#a8a8a8"/>
<rect x="1024" y="507" width="7" height="62" fill="#ffffff"/>
<rect x="1032" y="507" width="7" height="62" fill="#ffffff"/>
<rect x="1040" y="507" width="7" height="62" fill="#ffffff"/>
<rect x="1048" y="507" width="7" height="62" fill="#ffffff"/>
<text x="214" y="515" fill="#fff" font-size="10" letter-spacing="-0.35">All-in-one of ProFx 0.000000 1.000000</text>
<text x="1281" y="287.5" fill="#fff" font-size="10" letter-spacing="-0.5">55.16990</text>
<text x="1281" y="291" fill="#fff" font-size="10" letter-spacing="-0.5">40</text>
<text x="1281" y="317" fill="#fff" font-size="10" letter-spacing="-0.5">0.00</text>
<text x="1281" y="344" fill="#fff" font-size="10" letter-spacing="-0.5">-40</text>
<text x="1281" y="347" fill="#fff" font-size="10" letter-spacing="-0.5">-54.98770</text>
<text x="1281" y="362" fill="#fff" font-size="10" letter-spacing="-0.5">79.5858</text>
<text x="1281" y="389.5" fill="#fff" font-size="10" letter-spacing="-0.5">0.00</text>
<text x="1281" y="421.5" fill="#fff" font-size="10" letter-spacing="-0.5">-92.398</text>
<text x="1281" y="437" fill="#fff" font-size="10" letter-spacing="-0.5">3</text>
<text x="1281" y="497" fill="#fff" font-size="10" letter-spacing="-0.5">0</text>
<text x="1281" y="513" fill="#fff" font-size="10" letter-spacing="-0.5">1.05</text>
<text x="1281" y="574" fill="#fff" font-size="10" letter-spacing="-0.5">0.00</text>
<text x="1281" y="572" fill="#fff" font-size="10" letter-spacing="-0.5">-0.05</text>
<line x1="1278" y1="279.5" x2="1281" y2="279.5" stroke="#c8c8c8"/>
<line x1="1278" y1="314.5" x2="1281" y2="314.5" stroke="#c8c8c8"/>
<line x1="1278" y1="340.5" x2="1281" y2="340.5" stroke="#c8c8c8"/>
<line x1="1278" y1="386.5" x2="1281" y2="386.5" stroke="#c8c8c8"/>
<line x1="1278" y1="509.5" x2="1281" y2="509.5" stroke="#c8c8c8"/>
<line x1="1278" y1="571.5" x2="1281" y2="571.5" stroke="#c8c8c8"/>
<line x1="211.5" y1="574" x2="211.5" y2="577" stroke="#c8c8c8"/>
<text x="210" y="586" fill="#fff" font-size="10" letter-spacing="-0.4">6 Feb 2018</text>
<line x1="275.5" y1="574" x2="275.5" y2="577" stroke="#c8c8c8"/>
<text x="274" y="586" fill="#fff" font-size="10" letter-spacing="-0.4">6 Feb 19:00</text>
<line x1="339.5" y1="574" x2="339.5" y2="577" stroke="#c8c8c8"/>
<text x="338" y="586" fill="#fff" font-size="10" letter-spacing="-0.4">6 Feb 23:00</text>
<line x1="403.5" y1="574" x2="403.5" y2="577" stroke="#c8c8c8"/>
<text x="402" y="586" fill="#fff" font-size="10" letter-spacing="-0.4">7 Feb 03:00</text>
<line x1="467.5" y1="574" x2="467.5" y2="577" stroke="#c8c8c8"/>
<text x="466" y="586" fill="#fff" font-size="10" letter-spacing="-0.4">7 Feb 07:00</text>
<line x1="531.5" y1="574" x2="531.5" y2="577" stroke="#c8c8c8"/>
<text x="530" y="586" fill="#fff" font-size="10" letter-spacing="-0.4">7 Feb 11:00</text>
<line x1="595.5" y1="574" x2="595.5" y2="577" stroke="#c8c8c8"/>
<text x="594" y="586" fill="#fff" font-size="10" letter-spacing="-0.4">7 Feb 15:00</text>
<line x1="659.5" y1="574" x2="659.5" y2="577" stroke="#c8c8c8"/>
<text x="658" y="586" fill="#fff" font-size="10" letter-spacing="-0.4">7 Feb 19:00</text>
<line x1="723.5" y1="574" x2="723.5" y2="577" stroke="#c8c8c8"/>
<text x="722" y="586" fill="#fff" font-size="10" letter-spacing="-0.4">7 Feb 23:00</text>
<line x1="787.5" y1="574" x2="787.5" y2="577" stroke="#c8c8c8"/>
<text x="786" y="586" fill="#fff" font-size="10" letter-spacing="-0.4">8 Feb 03:00</text>
<line x1="851.5" y1="574" x2="851.5" y2="577" stroke="#c8c8c8"/>
<text x="850" y="586" fill="#fff" font-size="10" letter-spacing="-0.4">8 Feb 07:00</text>
<line x1="915.5" y1="574" x2="915.5" y2="577" stroke="#c8c8c8"/>
<text x="914" y="586" fill="#fff" font-size="10" letter-spacing="-0.4">8 Feb 11:00</text>
<line x1="979.5" y1="574" x2="979.5" y2="577" stroke="#c8c8c8"/>
<text x="978" y="586" fill="#fff" font-size="10" letter-spacing="-0.4">8 Feb 15:00</text>
<line x1="1043.5" y1="574" x2="1043.5" y2="577" stroke="#c8c8c8"/>
<text x="1042" y="586" fill="#fff" font-size="10" letter-spacing="-0.4">8 Feb 19:00</text>
</svg>
<div class="a gray" style="left:207px;top:594px;width:1114px;height:22px"></div>
<div class="a" style="left:207px;top:594px;width:1114px;height:2px;background:#fff"></div>
<div class="a" style="left:207px;top:596px;width:1114px;height:1px;background:#404040"></div>
<div class="a" style="left:207px;top:596px;width:93px;height:19px;background:#d6d3ce;border-left:1px solid #fff;border-top:1px solid #404040"></div>
<div class="a" style="left:300px;top:596px;width:84px;height:19px;background:#fff;border-right:1px solid #404040;border-bottom:1px solid #404040"></div>
<div class="t" style="left:223px;top:601px;font-size:10px;color:#555">EURUSDe,M5</div><div class="t" style="left:310px;top:601px;font-size:10px;color:#000">GBPUSD,M30</div>
<svg class="a" style="left:1289px;top:601px" width="26" height="9" viewBox="0 0 26 9"><path d="M4,1 L1,4.5 L4,8 Z M21,1 L24,4.5 L21,8 Z" fill="#a8a8a8"/></svg>
<div class="a" style="left:8px;top:616px;width:1313px;height:1px;background:#fff"></div>

<div class="a" style="left:8px;top:617px;width:1313px;height:101px;background:#fff"></div>
<div class="a gray" style="left:8px;top:617px;width:1313px;height:4px"></div>
<div class="a" style="left:8px;top:620px;width:1310px;height:18px;background:#d6d3ce;border-top:1px solid #a0a0a0;border-bottom:1px solid #404040;border-right:1px solid #404040;box-shadow:inset 0 1px 0 #fff,inset 0 -1px 0 #808080"></div>
<div class="a" style="left:80px;top:622px;width:1px;height:15px;background:#808080"></div>
<div class="a" style="left:81px;top:622px;width:1px;height:15px;background:#fff"></div>
<div class="a" style="left:80px;top:638px;width:1px;height:20px;background:#e0e0e0"></div>
<div class="a" style="left:230px;top:622px;width:1px;height:15px;background:#808080"></div>
<div class="a" style="left:231px;top:622px;width:1px;height:15px;background:#fff"></div>
<div class="a" style="left:230px;top:638px;width:1px;height:20px;background:#e0e0e0"></div>
<div class="a" style="left:305px;top:622px;width:1px;height:15px;background:#808080"></div>
<div class="a" style="left:306px;top:622px;width:1px;height:15px;background:#fff"></div>
<div class="a" style="left:305px;top:638px;width:1px;height:20px;background:#e0e0e0"></div>
<div class="a" style="left:363px;top:622px;width:1px;height:15px;background:#808080"></div>
<div class="a" style="left:364px;top:622px;width:1px;height:15px;background:#fff"></div>
<div class="a" style="left:363px;top:638px;width:1px;height:20px;background:#e0e0e0"></div>
<div class="a" style="left:438px;top:622px;width:1px;height:15px;background:#808080"></div>
<div class="a" style="left:439px;top:622px;width:1px;height:15px;background:#fff"></div>
<div class="a" style="left:438px;top:638px;width:1px;height:20px;background:#e0e0e0"></div>
<div class="a" style="left:521px;top:622px;width:1px;height:15px;background:#808080"></div>
<div class="a" style="left:522px;top:622px;width:1px;height:15px;background:#fff"></div>
<div class="a" style="left:521px;top:638px;width:1px;height:20px;background:#e0e0e0"></div>
<div class="a" style="left:604px;top:622px;width:1px;height:15px;background:#808080"></div>
<div class="a" style="left:605px;top:622px;width:1px;height:15px;background:#fff"></div>
<div class="a" style="left:604px;top:638px;width:1px;height:20px;background:#e0e0e0"></div>
<div class="a" style="left:687px;top:622px;width:1px;height:15px;background:#808080"></div>
<div class="a" style="left:688px;top:622px;width:1px;height:15px;background:#fff"></div>
<div class="a" style="left:687px;top:638px;width:1px;height:20px;background:#e0e0e0"></div>
<div class="a" style="left:770px;top:622px;width:1px;height:15px;background:#808080"></div>
<div class="a" style="left:771px;top:622px;width:1px;height:15px;background:#fff"></div>
<div class="a" style="left:770px;top:638px;width:1px;height:20px;background:#e0e0e0"></div>
<div class="a" style="left:853px;top:622px;width:1px;height:15px;background:#808080"></div>
<div class="a" style="left:854px;top:622px;width:1px;height:15px;background:#fff"></div>
<div class="a" style="left:853px;top:638px;width:1px;height:20px;background:#e0e0e0"></div>
<div class="a" style="left:936px;top:622px;width:1px;height:15px;background:#808080"></div>
<div class="a" style="left:937px;top:622px;width:1px;height:15px;background:#fff"></div>
<div class="a" style="left:936px;top:638px;width:1px;height:20px;background:#e0e0e0"></div>
<div class="a" style="left:1061px;top:622px;width:1px;height:15px;background:#808080"></div>
<div class="a" style="left:1062px;top:622px;width:1px;height:15px;background:#fff"></div>
<div class="a" style="left:1061px;top:638px;width:1px;height:20px;background:#e0e0e0"></div>
<div class="t" style="right:1121px;top:625px;font-size:10.6px">Время</div>
<div class="t" style="right:1119px;top:643px;font-size:10.8px">2018.02.08 18:53:22</div>
<div class="t" style="right:1046px;top:625px;font-size:10.6px">Тип</div>
<div class="t" style="right:1044px;top:643px;font-size:10.8px">sell</div>
<div class="t" style="right:988px;top:625px;font-size:10.6px">Объем</div>
<div class="t" style="right:986px;top:643px;font-size:10.8px">0.03</div>
<div class="t" style="right:913px;top:625px;font-size:10.6px">Символ</div>
<div class="t" style="right:911px;top:643px;font-size:10.8px">gbpusd</div>
<div class="t" style="right:830px;top:625px;font-size:10.6px">Цена</div>
<div class="t" style="right:828px;top:643px;font-size:10.8px">1.39441</div>
<div class="t" style="right:747px;top:625px;font-size:10.6px">S / L</div>
<div class="t" style="right:745px;top:643px;font-size:10.8px">1.39431</div>
<div class="t" style="right:664px;top:625px;font-size:10.6px">T / P</div>
<div class="t" style="right:662px;top:643px;font-size:10.8px">1.29444</div>
<div class="t" style="right:581px;top:625px;font-size:10.6px">Цена</div>
<div class="t" style="right:579px;top:643px;font-size:10.8px">1.39013</div>
<div class="t" style="right:498px;top:625px;font-size:10.6px">Комиссия</div>
<div class="t" style="right:496px;top:643px;font-size:10.8px">0.00</div>
<div class="t" style="right:415px;top:625px;font-size:10.6px">Своп</div>
<div class="t" style="right:413px;top:643px;font-size:10.8px">0.00</div>
<div class="t" style="right:290px;top:625px;font-size:10.6px">Прибыль</div>
<div class="t" style="right:308px;top:643px;font-size:10.8px">10.49</div>
<div class="t" style="right:34px;top:625px;font-size:10.6px">Комментарий</div>
<div class="t" style="right:33px;top:643px;font-size:10.8px">3030</div>
<div class="t" style="left:4px;top:625px;font-size:10.6px;clip-path:inset(0 0 0 4px)">о</div>
<svg class="a" style="left:24px;top:625px" width="10" height="9" viewBox="0 0 10 9"><path d="M1,8 L5,1 L9,8 Z" fill="none" stroke="#fff" stroke-width="1"/><path d="M1.5,8.5 H9" stroke="#a0a0a0"/></svg>
<div class="t" style="left:-4px;top:643px;font-size:10.8px;clip-path:inset(0 0 0 12px)">7190087</div>
<svg class="a" style="left:1047px;top:643px" width="10" height="10" viewBox="0 0 10 10"><path d="M1.5,1.5 L8.5,8.5 M8.5,1.5 L1.5,8.5" stroke="#909090" stroke-width="2"/></svg>
<div class="a" style="left:8px;top:658px;width:1310px;height:20px;background:#c9c8cb"></div>
<div class="t" style="left:-12px;top:662px;font-size:11px;font-weight:bold;letter-spacing:0.56px;clip-path:inset(0 0 0 20px)">Баланс: 79.82 EUR&nbsp; Средства: 90.31&nbsp; Маржа: 6.83&nbsp; Свободная маржа: 83.48&nbsp; Уровень: 1322.66%</div>
<div class="t" style="left:1008px;top:661px;font-family:Liberation Serif,serif;font-size:13px;font-weight:bold">10.49</div>
<div class="a" style="left:8px;top:702px;width:1313px;height:16px;background:#f0f0f0"></div>
<div class="a" style="left:72px;top:703px;width:1231px;height:15px;background:#cdcdcd"></div>
<svg class="a" style="left:12px;top:705px" width="10" height="10" viewBox="0 0 10 10"><path d="M6.5,1.5 L3,5 L6.5,8.5" stroke="#606060" stroke-width="2" fill="none"/></svg>
<svg class="a" style="left:1308px;top:705px" width="10" height="10" viewBox="0 0 10 10"><path d="M3.5,1.5 L7,5 L3.5,8.5" stroke="#606060" stroke-width="2" fill="none"/></svg>
<div class="a" style="left:1318px;top:617px;width:3px;height:86px;background:#f0f0f0"></div>
<div class="a" style="left:1321px;top:31px;width:17px;height:687px;background:#f0f0f0"></div>
<div class="a" style="left:1322px;top:48px;width:15px;height:557px;background:#cdcdcd"></div>
<div class="a" style="left:1320px;top:123px;width:1px;height:472px;background:#fff"></div>
<svg class="a" style="left:1324px;top:36px" width="11" height="8" viewBox="0 0 11 8"><path d="M1.5,6.5 L5.5,2 L9.5,6.5" stroke="#606060" stroke-width="2" fill="none"/></svg><svg class="a" style="left:1324px;top:690px" width="11" height="8" viewBox="0 0 11 8"><path d="M1.5,1.5 L5.5,6 L9.5,1.5" stroke="#606060" stroke-width="2" fill="none"/></svg><svg class="a" style="left:1325px;top:706px" width="11" height="11" viewBox="0 0 11 11"><path d="M8,1h2v2h-2zM5,4h2v2h-2zM8,4h2v2h-2zM2,7h2v2h-2zM5,7h2v2h-2zM8,7h2v2h-2z" fill="#a8a8a8"/></svg>
<div class="a" style="left:1337px;top:31px;width:3px;height:687px;background:#eef4fa"></div>
<div class="a" style="left:1340px;top:31px;width:5px;height:687px;background:linear-gradient(90deg,#b8d2ee,#a6c4e6)"></div>

<div class="a" style="left:0;top:0;width:1px;height:727px;background:#2a3a48"></div>
<div class="a" style="left:1px;top:1px;width:1px;height:725px;background:#e0ecf8"></div>
<div class="a" style="left:2px;top:31px;width:6px;height:687px;background:linear-gradient(90deg,#b9d1ea,#c4d9ef)"></div>
<div class="a" style="left:1345px;top:0;width:1px;height:727px;background:#2a3a48"></div>
<div class="a" style="left:0;top:726px;width:1346px;height:1px;background:#2a3a48"></div>
</body></html>
